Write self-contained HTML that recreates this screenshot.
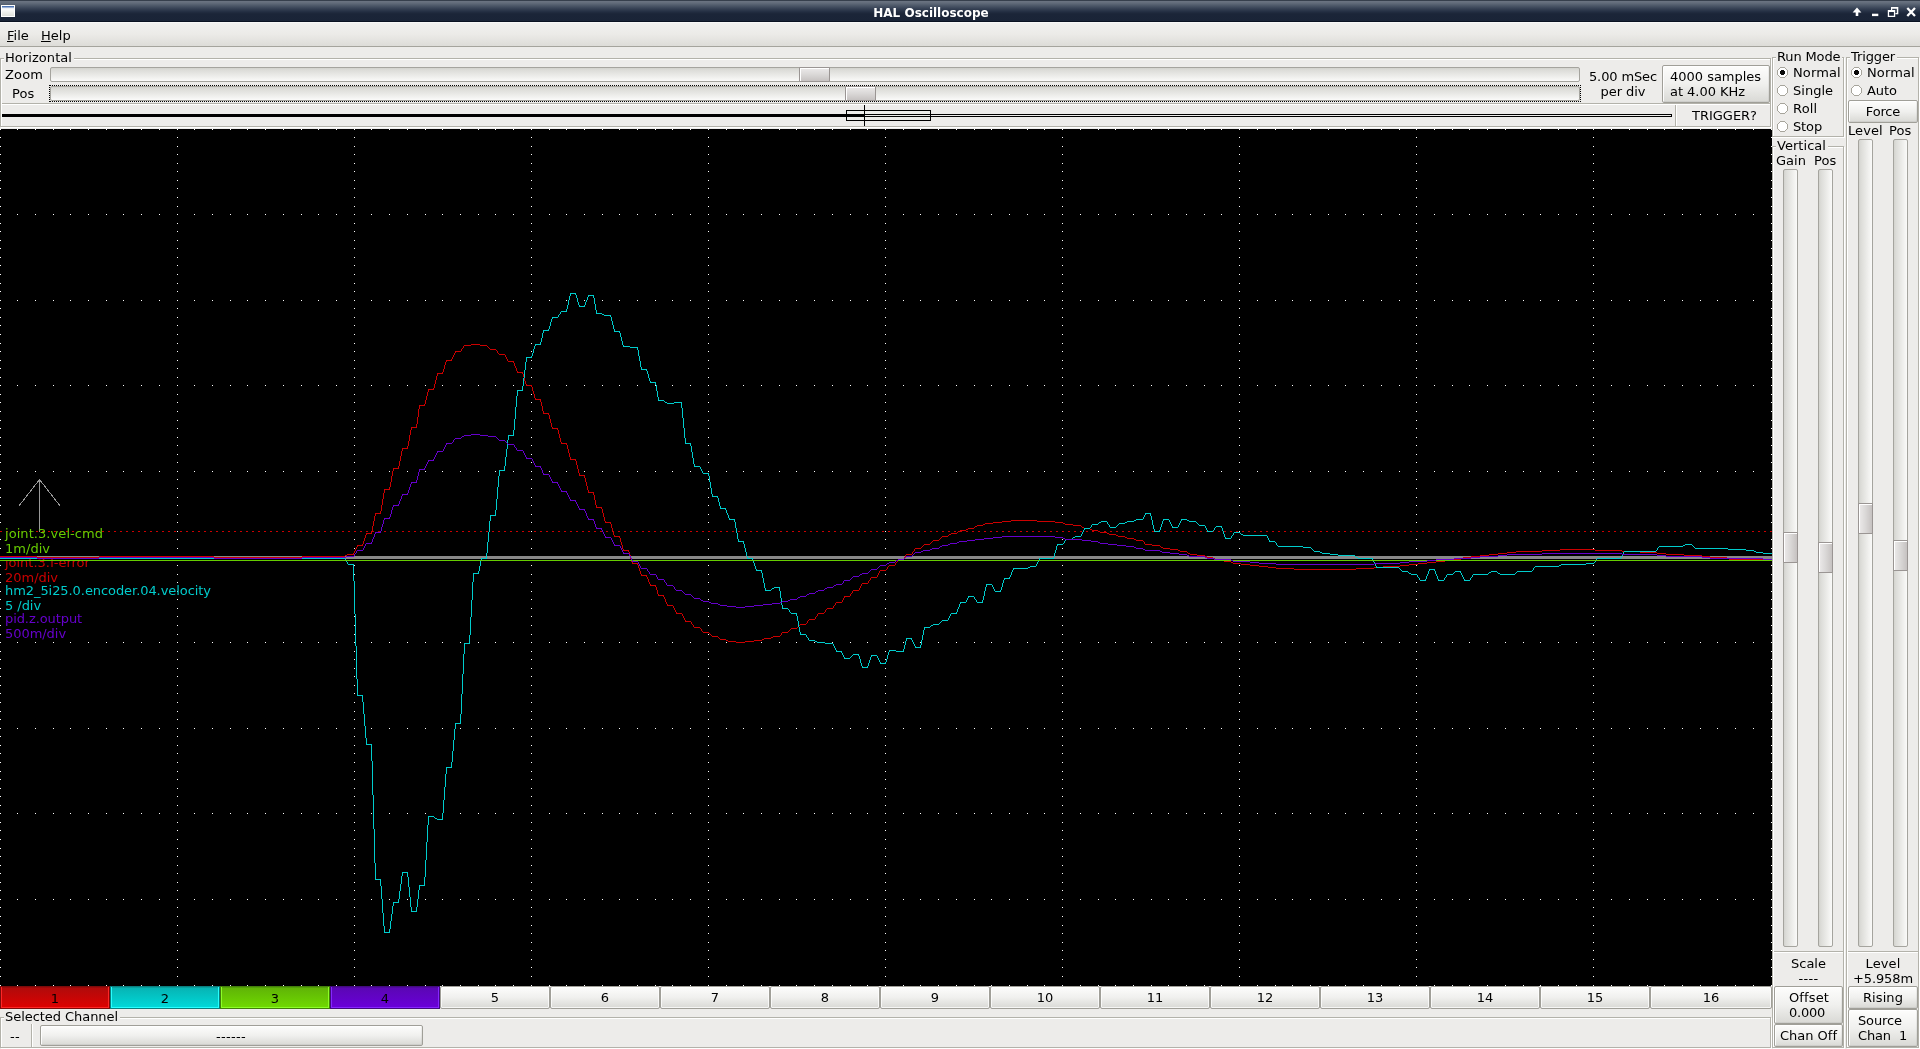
<!DOCTYPE html>
<html><head><meta charset="utf-8"><title>HAL Oscilloscope</title>
<style>
html,body{margin:0;padding:0;}
body{width:1920px;height:1049px;position:relative;overflow:hidden;background:#edecea;font-family:"DejaVu Sans","Liberation Sans",sans-serif;font-size:13px;color:#000;}
.a{position:absolute;white-space:nowrap;}
.t{position:absolute;white-space:nowrap;line-height:15px;height:15px;will-change:transform;}
.c{text-align:center;}
#title{left:0;top:0;width:1920px;height:22px;background:linear-gradient(#363f4c 0px,#363f4c 1px,#6b7482 1px,#626c7a 3px,#4a5566 6px,#343f52 9px,#222d41 12px,#1b2538 14px,#1a2437 21px,#0a1222 21px,#0a1222 22px);}
#title .tt{will-change:transform;left:0;width:1862px;top:5px;text-align:center;color:#fff;font-weight:bold;font-size:12px;line-height:16px;letter-spacing:0;}
#menu{left:0;top:22px;width:1920px;height:24px;background:linear-gradient(#fff 0,#f1f1ef 1px,#ecebe8 12px,#dddcd8 24px);border-bottom:1px solid #a5a49d;}
.frame{position:absolute;border:1px solid #b3b2aa;box-shadow:1px 1px 0 #fff, inset 1px 1px 0 #fff;box-sizing:border-box;}
.flab{position:absolute;background:#edecea;padding:0 2px 0 1px;line-height:15px;height:15px;white-space:nowrap;will-change:transform;}
.btn{position:absolute;box-sizing:border-box;border:1px solid #a09f98;border-radius:2px;background:linear-gradient(#fdfdfc 0,#f0f0ee 50%,#d9d9d5 100%);box-shadow:inset 1px 1px 0 rgba(255,255,255,.9), inset -1px -1px 0 rgba(0,0,0,.05);}
.htr{position:absolute;box-sizing:border-box;border:1px solid #a5a49e;border-radius:2px;background:linear-gradient(#d3d3ce 0,#dcdcd8 15%,#f3f3f1 80%,#fafaf9 100%);}
.vtr{position:absolute;box-sizing:border-box;border:1px solid #a5a49e;border-radius:2px;background:linear-gradient(90deg,#d3d3ce 0,#dcdcd8 15%,#f3f3f1 80%,#fafaf9 100%);}
.hth{position:absolute;box-sizing:border-box;border:1px solid #9a9593;border-radius:1px;background:linear-gradient(#eceaea 0,#dad8d7 50%,#c6c2c1 100%);box-shadow:inset 1px 1px 0 #fff;}
.vth{position:absolute;box-sizing:border-box;border:1px solid #9a9593;border-radius:1px;background:linear-gradient(90deg,#eceaea 0,#dad8d7 50%,#c6c2c1 100%);box-shadow:inset 1px 1px 0 #fff;}
.radio{position:absolute;width:11px;height:11px;box-sizing:border-box;border:1px solid #9c9b94;border-radius:50%;background:#fff;}
.radio.on::after{content:"";position:absolute;left:2px;top:2px;width:5px;height:5px;border-radius:50%;background:#000;}
.chb{will-change:transform;position:absolute;top:986px;height:23px;box-sizing:border-box;text-align:center;line-height:24px;color:#000;}
.chn{line-height:22px;border:1px solid #a09f98;border-radius:2px;background:linear-gradient(#fdfdfc 0,#f0f0ee 50%,#d9d9d5 100%);box-shadow:inset 0 0 0 1px rgba(255,255,255,.75);}
.hl{position:absolute;height:1px;background:#b3b2aa;box-shadow:0 1px 0 #fff;}
.vl{position:absolute;width:1px;background:#b3b2aa;box-shadow:1px 0 0 #fff;}
u{text-decoration:underline;text-underline-offset:1px;}
#scope{position:absolute;left:0;top:129px;}
</style></head><body>

<!-- title bar -->
<div class="a" id="title">
 <div class="a" style="left:1px;top:5px;width:14px;height:12px;box-sizing:border-box;border:1px solid #fff;background:linear-gradient(#3f67a8 0,#5b80bb 1px,#dfe6f2 2px,#fdfdfd 3px,#f0f1ee 6px,#dfe0db 10px);"></div>
 <div class="a tt">HAL Oscilloscope</div>
 <svg class="a" style="left:1845px;top:0" width="75" height="22" viewBox="1845 0 75 22">
  <path d="M1857 7.6 L1861.4 12.6 H1858.3 V16 H1855.7 V12.6 H1852.6 Z" fill="#fff"/>
  <rect x="1872" y="13.7" width="6.3" height="2.4" fill="#fff"/>
  <path d="M1891 6.9 H1898.3 V14.3 H1895.4 V13.1 H1896.8 V8.8 H1892.2 V10 H1891 Z" fill="#fff"/>
  <path d="M1887.8 10 H1895.2 V17 H1887.8 Z M1889.1 12.1 V15.8 H1893.9 V12.1 Z" fill="#fff" fill-rule="evenodd"/>
  <path d="M1907.3 8 L1915 16 M1915 8 L1907.3 16" stroke="#fff" stroke-width="2.3" fill="none"/>
 </svg>
</div>

<!-- menu bar -->
<div class="a" id="menu">
 <div class="t" style="left:7px;top:6px;"><u>F</u>ile</div>
 <div class="t" style="left:41px;top:6px;"><u>H</u>elp</div>
</div>

<!-- Horizontal frame -->
<div class="frame" style="left:0;top:58px;width:1771px;height:69px;"></div>
<div class="flab" style="left:4px;top:50px;letter-spacing:0.062px;">Horizontal</div>
<div class="t" style="left:5px;top:67px;letter-spacing:0.133px;">Zoom</div>
<div class="t" style="left:12px;top:86px;letter-spacing:0.146px;">Pos</div>
<div class="htr" style="left:50px;top:67px;width:1530px;height:15px;"></div>
<div class="hth" style="left:799px;top:67px;width:31px;height:15px;"></div>
<div class="a" style="left:49px;top:85px;width:1532px;height:17px;box-sizing:border-box;border:1px dotted #000;"></div>
<div class="htr" style="left:50px;top:86px;width:1530px;height:15px;"></div>
<div class="hth" style="left:845px;top:86px;width:31px;height:15px;"></div>
<div class="t c" style="left:1583px;width:80px;top:69px;letter-spacing:-0.122px;">5.00 mSec</div>
<div class="t c" style="left:1583px;width:80px;top:84px;letter-spacing:-0.038px;">per div</div>
<div class="btn" style="left:1662px;top:65px;width:108px;height:38px;"></div>
<div class="t" style="left:1670px;top:69px;letter-spacing:-0.017px;">4000 samples</div>
<div class="t" style="left:1670px;top:84px;letter-spacing:-0.034px;">at 4.00 KHz</div>
<div class="hl" style="left:2px;top:103px;width:1768px;"></div>
<div class="vl" style="left:1675px;top:105px;height:21px;"></div>
<div class="t" style="left:1692px;top:108px;letter-spacing:-0.014px;">TRIGGER?</div>
<!-- record indicator -->
<svg class="a" style="left:0;top:104px" width="1680" height="23" viewBox="0 104 1680 23" shape-rendering="crispEdges">
 <rect x="2" y="114" width="863" height="3" fill="#000"/>
 <rect x="864.5" y="114.5" width="807" height="2" fill="none" stroke="#000" stroke-width="1"/>
 <rect x="846.5" y="110.5" width="84" height="10" fill="none" stroke="#000" stroke-width="1"/>
 <rect x="864" y="105" width="1" height="21" fill="#000"/>
</svg>

<svg id="scope" width="1772" height="857" viewBox="0 129 1772 857" shape-rendering="crispEdges">
<rect x="0" y="129" width="1772" height="857" fill="#000"/>
<g transform="translate(0,129.5)"><path d="M0 0h1M17 0h1M35 0h1M53 0h1M70 0h1M88 0h1M106 0h1M123 0h1M141 0h1M159 0h1M177 0h1M194 0h1M212 0h1M230 0h1M247 0h1M265 0h1M283 0h1M301 0h1M318 0h1M336 0h1M354 0h1M371 0h1M389 0h1M407 0h1M425 0h1M442 0h1M460 0h1M478 0h1M495 0h1M513 0h1M531 0h1M549 0h1M566 0h1M584 0h1M602 0h1M619 0h1M637 0h1M655 0h1M672 0h1M690 0h1M708 0h1M726 0h1M743 0h1M761 0h1M779 0h1M796 0h1M814 0h1M832 0h1M850 0h1M867 0h1M885 0h1M903 0h1M920 0h1M938 0h1M956 0h1M974 0h1M991 0h1M1009 0h1M1027 0h1M1044 0h1M1062 0h1M1080 0h1M1098 0h1M1115 0h1M1133 0h1M1151 0h1M1168 0h1M1186 0h1M1204 0h1M1221 0h1M1239 0h1M1257 0h1M1275 0h1M1292 0h1M1310 0h1M1328 0h1M1345 0h1M1363 0h1M1381 0h1M1399 0h1M1416 0h1M1434 0h1M1452 0h1M1469 0h1M1487 0h1M1505 0h1M1523 0h1M1540 0h1M1558 0h1M1576 0h1M1593 0h1M1611 0h1M1629 0h1M1647 0h1M1664 0h1M1682 0h1M1700 0h1M1717 0h1M1735 0h1M1753 0h1M1771 0h1M0 8h1M177 8h1M354 8h1M531 8h1M708 8h1M885 8h1M1062 8h1M1239 8h1M1416 8h1M1593 8h1M1771 8h1M0 17h1M177 17h1M354 17h1M531 17h1M708 17h1M885 17h1M1062 17h1M1239 17h1M1416 17h1M1593 17h1M1771 17h1M0 25h1M177 25h1M354 25h1M531 25h1M708 25h1M885 25h1M1062 25h1M1239 25h1M1416 25h1M1593 25h1M1771 25h1M0 34h1M177 34h1M354 34h1M531 34h1M708 34h1M885 34h1M1062 34h1M1239 34h1M1416 34h1M1593 34h1M1771 34h1M0 42h1M177 42h1M354 42h1M531 42h1M708 42h1M885 42h1M1062 42h1M1239 42h1M1416 42h1M1593 42h1M1771 42h1M0 51h1M177 51h1M354 51h1M531 51h1M708 51h1M885 51h1M1062 51h1M1239 51h1M1416 51h1M1593 51h1M1771 51h1M0 59h1M177 59h1M354 59h1M531 59h1M708 59h1M885 59h1M1062 59h1M1239 59h1M1416 59h1M1593 59h1M1771 59h1M0 68h1M177 68h1M354 68h1M531 68h1M708 68h1M885 68h1M1062 68h1M1239 68h1M1416 68h1M1593 68h1M1771 68h1M0 77h1M177 77h1M354 77h1M531 77h1M708 77h1M885 77h1M1062 77h1M1239 77h1M1416 77h1M1593 77h1M1771 77h1M0 85h1M17 85h1M35 85h1M53 85h1M70 85h1M88 85h1M106 85h1M123 85h1M141 85h1M159 85h1M177 85h1M194 85h1M212 85h1M230 85h1M247 85h1M265 85h1M283 85h1M301 85h1M318 85h1M336 85h1M354 85h1M371 85h1M389 85h1M407 85h1M425 85h1M442 85h1M460 85h1M478 85h1M495 85h1M513 85h1M531 85h1M549 85h1M566 85h1M584 85h1M602 85h1M619 85h1M637 85h1M655 85h1M672 85h1M690 85h1M708 85h1M726 85h1M743 85h1M761 85h1M779 85h1M796 85h1M814 85h1M832 85h1M850 85h1M867 85h1M885 85h1M903 85h1M920 85h1M938 85h1M956 85h1M974 85h1M991 85h1M1009 85h1M1027 85h1M1044 85h1M1062 85h1M1080 85h1M1098 85h1M1115 85h1M1133 85h1M1151 85h1M1168 85h1M1186 85h1M1204 85h1M1221 85h1M1239 85h1M1257 85h1M1275 85h1M1292 85h1M1310 85h1M1328 85h1M1345 85h1M1363 85h1M1381 85h1M1399 85h1M1416 85h1M1434 85h1M1452 85h1M1469 85h1M1487 85h1M1505 85h1M1523 85h1M1540 85h1M1558 85h1M1576 85h1M1593 85h1M1611 85h1M1629 85h1M1647 85h1M1664 85h1M1682 85h1M1700 85h1M1717 85h1M1735 85h1M1753 85h1M1771 85h1M0 94h1M177 94h1M354 94h1M531 94h1M708 94h1M885 94h1M1062 94h1M1239 94h1M1416 94h1M1593 94h1M1771 94h1M0 102h1M177 102h1M354 102h1M531 102h1M708 102h1M885 102h1M1062 102h1M1239 102h1M1416 102h1M1593 102h1M1771 102h1M0 111h1M177 111h1M354 111h1M531 111h1M708 111h1M885 111h1M1062 111h1M1239 111h1M1416 111h1M1593 111h1M1771 111h1M0 119h1M177 119h1M354 119h1M531 119h1M708 119h1M885 119h1M1062 119h1M1239 119h1M1416 119h1M1593 119h1M1771 119h1M0 128h1M177 128h1M354 128h1M531 128h1M708 128h1M885 128h1M1062 128h1M1239 128h1M1416 128h1M1593 128h1M1771 128h1M0 136h1M177 136h1M354 136h1M531 136h1M708 136h1M885 136h1M1062 136h1M1239 136h1M1416 136h1M1593 136h1M1771 136h1M0 145h1M177 145h1M354 145h1M531 145h1M708 145h1M885 145h1M1062 145h1M1239 145h1M1416 145h1M1593 145h1M1771 145h1M0 154h1M177 154h1M354 154h1M531 154h1M708 154h1M885 154h1M1062 154h1M1239 154h1M1416 154h1M1593 154h1M1771 154h1M0 162h1M177 162h1M354 162h1M531 162h1M708 162h1M885 162h1M1062 162h1M1239 162h1M1416 162h1M1593 162h1M1771 162h1M0 171h1M17 171h1M35 171h1M53 171h1M70 171h1M88 171h1M106 171h1M123 171h1M141 171h1M159 171h1M177 171h1M194 171h1M212 171h1M230 171h1M247 171h1M265 171h1M283 171h1M301 171h1M318 171h1M336 171h1M354 171h1M371 171h1M389 171h1M407 171h1M425 171h1M442 171h1M460 171h1M478 171h1M495 171h1M513 171h1M531 171h1M549 171h1M566 171h1M584 171h1M602 171h1M619 171h1M637 171h1M655 171h1M672 171h1M690 171h1M708 171h1M726 171h1M743 171h1M761 171h1M779 171h1M796 171h1M814 171h1M832 171h1M850 171h1M867 171h1M885 171h1M903 171h1M920 171h1M938 171h1M956 171h1M974 171h1M991 171h1M1009 171h1M1027 171h1M1044 171h1M1062 171h1M1080 171h1M1098 171h1M1115 171h1M1133 171h1M1151 171h1M1168 171h1M1186 171h1M1204 171h1M1221 171h1M1239 171h1M1257 171h1M1275 171h1M1292 171h1M1310 171h1M1328 171h1M1345 171h1M1363 171h1M1381 171h1M1399 171h1M1416 171h1M1434 171h1M1452 171h1M1469 171h1M1487 171h1M1505 171h1M1523 171h1M1540 171h1M1558 171h1M1576 171h1M1593 171h1M1611 171h1M1629 171h1M1647 171h1M1664 171h1M1682 171h1M1700 171h1M1717 171h1M1735 171h1M1753 171h1M1771 171h1M0 179h1M177 179h1M354 179h1M531 179h1M708 179h1M885 179h1M1062 179h1M1239 179h1M1416 179h1M1593 179h1M1771 179h1M0 188h1M177 188h1M354 188h1M531 188h1M708 188h1M885 188h1M1062 188h1M1239 188h1M1416 188h1M1593 188h1M1771 188h1M0 196h1M177 196h1M354 196h1M531 196h1M708 196h1M885 196h1M1062 196h1M1239 196h1M1416 196h1M1593 196h1M1771 196h1M0 205h1M177 205h1M354 205h1M531 205h1M708 205h1M885 205h1M1062 205h1M1239 205h1M1416 205h1M1593 205h1M1771 205h1M0 214h1M177 214h1M354 214h1M531 214h1M708 214h1M885 214h1M1062 214h1M1239 214h1M1416 214h1M1593 214h1M1771 214h1M0 222h1M177 222h1M354 222h1M531 222h1M708 222h1M885 222h1M1062 222h1M1239 222h1M1416 222h1M1593 222h1M1771 222h1M0 231h1M177 231h1M354 231h1M531 231h1M708 231h1M885 231h1M1062 231h1M1239 231h1M1416 231h1M1593 231h1M1771 231h1M0 239h1M177 239h1M354 239h1M531 239h1M708 239h1M885 239h1M1062 239h1M1239 239h1M1416 239h1M1593 239h1M1771 239h1M0 248h1M177 248h1M354 248h1M531 248h1M708 248h1M885 248h1M1062 248h1M1239 248h1M1416 248h1M1593 248h1M1771 248h1M0 256h1M17 256h1M35 256h1M53 256h1M70 256h1M88 256h1M106 256h1M123 256h1M141 256h1M159 256h1M177 256h1M194 256h1M212 256h1M230 256h1M247 256h1M265 256h1M283 256h1M301 256h1M318 256h1M336 256h1M354 256h1M371 256h1M389 256h1M407 256h1M425 256h1M442 256h1M460 256h1M478 256h1M495 256h1M513 256h1M531 256h1M549 256h1M566 256h1M584 256h1M602 256h1M619 256h1M637 256h1M655 256h1M672 256h1M690 256h1M708 256h1M726 256h1M743 256h1M761 256h1M779 256h1M796 256h1M814 256h1M832 256h1M850 256h1M867 256h1M885 256h1M903 256h1M920 256h1M938 256h1M956 256h1M974 256h1M991 256h1M1009 256h1M1027 256h1M1044 256h1M1062 256h1M1080 256h1M1098 256h1M1115 256h1M1133 256h1M1151 256h1M1168 256h1M1186 256h1M1204 256h1M1221 256h1M1239 256h1M1257 256h1M1275 256h1M1292 256h1M1310 256h1M1328 256h1M1345 256h1M1363 256h1M1381 256h1M1399 256h1M1416 256h1M1434 256h1M1452 256h1M1469 256h1M1487 256h1M1505 256h1M1523 256h1M1540 256h1M1558 256h1M1576 256h1M1593 256h1M1611 256h1M1629 256h1M1647 256h1M1664 256h1M1682 256h1M1700 256h1M1717 256h1M1735 256h1M1753 256h1M1771 256h1M0 265h1M177 265h1M354 265h1M531 265h1M708 265h1M885 265h1M1062 265h1M1239 265h1M1416 265h1M1593 265h1M1771 265h1M0 273h1M177 273h1M354 273h1M531 273h1M708 273h1M885 273h1M1062 273h1M1239 273h1M1416 273h1M1593 273h1M1771 273h1M0 282h1M177 282h1M354 282h1M531 282h1M708 282h1M885 282h1M1062 282h1M1239 282h1M1416 282h1M1593 282h1M1771 282h1M0 291h1M177 291h1M354 291h1M531 291h1M708 291h1M885 291h1M1062 291h1M1239 291h1M1416 291h1M1593 291h1M1771 291h1M0 299h1M177 299h1M354 299h1M531 299h1M708 299h1M885 299h1M1062 299h1M1239 299h1M1416 299h1M1593 299h1M1771 299h1M0 308h1M177 308h1M354 308h1M531 308h1M708 308h1M885 308h1M1062 308h1M1239 308h1M1416 308h1M1593 308h1M1771 308h1M0 316h1M177 316h1M354 316h1M531 316h1M708 316h1M885 316h1M1062 316h1M1239 316h1M1416 316h1M1593 316h1M1771 316h1M0 325h1M177 325h1M354 325h1M531 325h1M708 325h1M885 325h1M1062 325h1M1239 325h1M1416 325h1M1593 325h1M1771 325h1M0 333h1M177 333h1M354 333h1M531 333h1M708 333h1M885 333h1M1062 333h1M1239 333h1M1416 333h1M1593 333h1M1771 333h1M0 342h1M17 342h1M35 342h1M53 342h1M70 342h1M88 342h1M106 342h1M123 342h1M141 342h1M159 342h1M177 342h1M194 342h1M212 342h1M230 342h1M247 342h1M265 342h1M283 342h1M301 342h1M318 342h1M336 342h1M354 342h1M371 342h1M389 342h1M407 342h1M425 342h1M442 342h1M460 342h1M478 342h1M495 342h1M513 342h1M531 342h1M549 342h1M566 342h1M584 342h1M602 342h1M619 342h1M637 342h1M655 342h1M672 342h1M690 342h1M708 342h1M726 342h1M743 342h1M761 342h1M779 342h1M796 342h1M814 342h1M832 342h1M850 342h1M867 342h1M885 342h1M903 342h1M920 342h1M938 342h1M956 342h1M974 342h1M991 342h1M1009 342h1M1027 342h1M1044 342h1M1062 342h1M1080 342h1M1098 342h1M1115 342h1M1133 342h1M1151 342h1M1168 342h1M1186 342h1M1204 342h1M1221 342h1M1239 342h1M1257 342h1M1275 342h1M1292 342h1M1310 342h1M1328 342h1M1345 342h1M1363 342h1M1381 342h1M1399 342h1M1416 342h1M1434 342h1M1452 342h1M1469 342h1M1487 342h1M1505 342h1M1523 342h1M1540 342h1M1558 342h1M1576 342h1M1593 342h1M1611 342h1M1629 342h1M1647 342h1M1664 342h1M1682 342h1M1700 342h1M1717 342h1M1735 342h1M1753 342h1M1771 342h1M0 350h1M177 350h1M354 350h1M531 350h1M708 350h1M885 350h1M1062 350h1M1239 350h1M1416 350h1M1593 350h1M1771 350h1M0 359h1M177 359h1M354 359h1M531 359h1M708 359h1M885 359h1M1062 359h1M1239 359h1M1416 359h1M1593 359h1M1771 359h1M0 368h1M177 368h1M354 368h1M531 368h1M708 368h1M885 368h1M1062 368h1M1239 368h1M1416 368h1M1593 368h1M1771 368h1M0 376h1M177 376h1M354 376h1M531 376h1M708 376h1M885 376h1M1062 376h1M1239 376h1M1416 376h1M1593 376h1M1771 376h1M0 385h1M177 385h1M354 385h1M531 385h1M708 385h1M885 385h1M1062 385h1M1239 385h1M1416 385h1M1593 385h1M1771 385h1M0 393h1M177 393h1M354 393h1M531 393h1M708 393h1M885 393h1M1062 393h1M1239 393h1M1416 393h1M1593 393h1M1771 393h1M0 402h1M177 402h1M354 402h1M531 402h1M708 402h1M885 402h1M1062 402h1M1239 402h1M1416 402h1M1593 402h1M1771 402h1M0 410h1M177 410h1M354 410h1M531 410h1M708 410h1M885 410h1M1062 410h1M1239 410h1M1416 410h1M1593 410h1M1771 410h1M0 419h1M177 419h1M354 419h1M531 419h1M708 419h1M885 419h1M1062 419h1M1239 419h1M1416 419h1M1593 419h1M1771 419h1M0 428h1M17 428h1M35 428h1M53 428h1M70 428h1M88 428h1M106 428h1M123 428h1M141 428h1M159 428h1M177 428h1M194 428h1M212 428h1M230 428h1M247 428h1M265 428h1M283 428h1M301 428h1M318 428h1M336 428h1M354 428h1M371 428h1M389 428h1M407 428h1M425 428h1M442 428h1M460 428h1M478 428h1M495 428h1M513 428h1M531 428h1M549 428h1M566 428h1M584 428h1M602 428h1M619 428h1M637 428h1M655 428h1M672 428h1M690 428h1M708 428h1M726 428h1M743 428h1M761 428h1M779 428h1M796 428h1M814 428h1M832 428h1M850 428h1M867 428h1M885 428h1M903 428h1M920 428h1M938 428h1M956 428h1M974 428h1M991 428h1M1009 428h1M1027 428h1M1044 428h1M1062 428h1M1080 428h1M1098 428h1M1115 428h1M1133 428h1M1151 428h1M1168 428h1M1186 428h1M1204 428h1M1221 428h1M1239 428h1M1257 428h1M1275 428h1M1292 428h1M1310 428h1M1328 428h1M1345 428h1M1363 428h1M1381 428h1M1399 428h1M1416 428h1M1434 428h1M1452 428h1M1469 428h1M1487 428h1M1505 428h1M1523 428h1M1540 428h1M1558 428h1M1576 428h1M1593 428h1M1611 428h1M1629 428h1M1647 428h1M1664 428h1M1682 428h1M1700 428h1M1717 428h1M1735 428h1M1753 428h1M1771 428h1M0 436h1M177 436h1M354 436h1M531 436h1M708 436h1M885 436h1M1062 436h1M1239 436h1M1416 436h1M1593 436h1M1771 436h1M0 445h1M177 445h1M354 445h1M531 445h1M708 445h1M885 445h1M1062 445h1M1239 445h1M1416 445h1M1593 445h1M1771 445h1M0 453h1M177 453h1M354 453h1M531 453h1M708 453h1M885 453h1M1062 453h1M1239 453h1M1416 453h1M1593 453h1M1771 453h1M0 462h1M177 462h1M354 462h1M531 462h1M708 462h1M885 462h1M1062 462h1M1239 462h1M1416 462h1M1593 462h1M1771 462h1M0 470h1M177 470h1M354 470h1M531 470h1M708 470h1M885 470h1M1062 470h1M1239 470h1M1416 470h1M1593 470h1M1771 470h1M0 479h1M177 479h1M354 479h1M531 479h1M708 479h1M885 479h1M1062 479h1M1239 479h1M1416 479h1M1593 479h1M1771 479h1M0 487h1M177 487h1M354 487h1M531 487h1M708 487h1M885 487h1M1062 487h1M1239 487h1M1416 487h1M1593 487h1M1771 487h1M0 496h1M177 496h1M354 496h1M531 496h1M708 496h1M885 496h1M1062 496h1M1239 496h1M1416 496h1M1593 496h1M1771 496h1M0 505h1M177 505h1M354 505h1M531 505h1M708 505h1M885 505h1M1062 505h1M1239 505h1M1416 505h1M1593 505h1M1771 505h1M0 513h1M17 513h1M35 513h1M53 513h1M70 513h1M88 513h1M106 513h1M123 513h1M141 513h1M159 513h1M177 513h1M194 513h1M212 513h1M230 513h1M247 513h1M265 513h1M283 513h1M301 513h1M318 513h1M336 513h1M354 513h1M371 513h1M389 513h1M407 513h1M425 513h1M442 513h1M460 513h1M478 513h1M495 513h1M513 513h1M531 513h1M549 513h1M566 513h1M584 513h1M602 513h1M619 513h1M637 513h1M655 513h1M672 513h1M690 513h1M708 513h1M726 513h1M743 513h1M761 513h1M779 513h1M796 513h1M814 513h1M832 513h1M850 513h1M867 513h1M885 513h1M903 513h1M920 513h1M938 513h1M956 513h1M974 513h1M991 513h1M1009 513h1M1027 513h1M1044 513h1M1062 513h1M1080 513h1M1098 513h1M1115 513h1M1133 513h1M1151 513h1M1168 513h1M1186 513h1M1204 513h1M1221 513h1M1239 513h1M1257 513h1M1275 513h1M1292 513h1M1310 513h1M1328 513h1M1345 513h1M1363 513h1M1381 513h1M1399 513h1M1416 513h1M1434 513h1M1452 513h1M1469 513h1M1487 513h1M1505 513h1M1523 513h1M1540 513h1M1558 513h1M1576 513h1M1593 513h1M1611 513h1M1629 513h1M1647 513h1M1664 513h1M1682 513h1M1700 513h1M1717 513h1M1735 513h1M1753 513h1M1771 513h1M0 522h1M177 522h1M354 522h1M531 522h1M708 522h1M885 522h1M1062 522h1M1239 522h1M1416 522h1M1593 522h1M1771 522h1M0 530h1M177 530h1M354 530h1M531 530h1M708 530h1M885 530h1M1062 530h1M1239 530h1M1416 530h1M1593 530h1M1771 530h1M0 539h1M177 539h1M354 539h1M531 539h1M708 539h1M885 539h1M1062 539h1M1239 539h1M1416 539h1M1593 539h1M1771 539h1M0 547h1M177 547h1M354 547h1M531 547h1M708 547h1M885 547h1M1062 547h1M1239 547h1M1416 547h1M1593 547h1M1771 547h1M0 556h1M177 556h1M354 556h1M531 556h1M708 556h1M885 556h1M1062 556h1M1239 556h1M1416 556h1M1593 556h1M1771 556h1M0 564h1M177 564h1M354 564h1M531 564h1M708 564h1M885 564h1M1062 564h1M1239 564h1M1416 564h1M1593 564h1M1771 564h1M0 573h1M177 573h1M354 573h1M531 573h1M708 573h1M885 573h1M1062 573h1M1239 573h1M1416 573h1M1593 573h1M1771 573h1M0 582h1M177 582h1M354 582h1M531 582h1M708 582h1M885 582h1M1062 582h1M1239 582h1M1416 582h1M1593 582h1M1771 582h1M0 590h1M177 590h1M354 590h1M531 590h1M708 590h1M885 590h1M1062 590h1M1239 590h1M1416 590h1M1593 590h1M1771 590h1M0 599h1M17 599h1M35 599h1M53 599h1M70 599h1M88 599h1M106 599h1M123 599h1M141 599h1M159 599h1M177 599h1M194 599h1M212 599h1M230 599h1M247 599h1M265 599h1M283 599h1M301 599h1M318 599h1M336 599h1M354 599h1M371 599h1M389 599h1M407 599h1M425 599h1M442 599h1M460 599h1M478 599h1M495 599h1M513 599h1M531 599h1M549 599h1M566 599h1M584 599h1M602 599h1M619 599h1M637 599h1M655 599h1M672 599h1M690 599h1M708 599h1M726 599h1M743 599h1M761 599h1M779 599h1M796 599h1M814 599h1M832 599h1M850 599h1M867 599h1M885 599h1M903 599h1M920 599h1M938 599h1M956 599h1M974 599h1M991 599h1M1009 599h1M1027 599h1M1044 599h1M1062 599h1M1080 599h1M1098 599h1M1115 599h1M1133 599h1M1151 599h1M1168 599h1M1186 599h1M1204 599h1M1221 599h1M1239 599h1M1257 599h1M1275 599h1M1292 599h1M1310 599h1M1328 599h1M1345 599h1M1363 599h1M1381 599h1M1399 599h1M1416 599h1M1434 599h1M1452 599h1M1469 599h1M1487 599h1M1505 599h1M1523 599h1M1540 599h1M1558 599h1M1576 599h1M1593 599h1M1611 599h1M1629 599h1M1647 599h1M1664 599h1M1682 599h1M1700 599h1M1717 599h1M1735 599h1M1753 599h1M1771 599h1M0 607h1M177 607h1M354 607h1M531 607h1M708 607h1M885 607h1M1062 607h1M1239 607h1M1416 607h1M1593 607h1M1771 607h1M0 616h1M177 616h1M354 616h1M531 616h1M708 616h1M885 616h1M1062 616h1M1239 616h1M1416 616h1M1593 616h1M1771 616h1M0 624h1M177 624h1M354 624h1M531 624h1M708 624h1M885 624h1M1062 624h1M1239 624h1M1416 624h1M1593 624h1M1771 624h1M0 633h1M177 633h1M354 633h1M531 633h1M708 633h1M885 633h1M1062 633h1M1239 633h1M1416 633h1M1593 633h1M1771 633h1M0 642h1M177 642h1M354 642h1M531 642h1M708 642h1M885 642h1M1062 642h1M1239 642h1M1416 642h1M1593 642h1M1771 642h1M0 650h1M177 650h1M354 650h1M531 650h1M708 650h1M885 650h1M1062 650h1M1239 650h1M1416 650h1M1593 650h1M1771 650h1M0 659h1M177 659h1M354 659h1M531 659h1M708 659h1M885 659h1M1062 659h1M1239 659h1M1416 659h1M1593 659h1M1771 659h1M0 667h1M177 667h1M354 667h1M531 667h1M708 667h1M885 667h1M1062 667h1M1239 667h1M1416 667h1M1593 667h1M1771 667h1M0 676h1M177 676h1M354 676h1M531 676h1M708 676h1M885 676h1M1062 676h1M1239 676h1M1416 676h1M1593 676h1M1771 676h1M0 684h1M17 684h1M35 684h1M53 684h1M70 684h1M88 684h1M106 684h1M123 684h1M141 684h1M159 684h1M177 684h1M194 684h1M212 684h1M230 684h1M247 684h1M265 684h1M283 684h1M301 684h1M318 684h1M336 684h1M354 684h1M371 684h1M389 684h1M407 684h1M425 684h1M442 684h1M460 684h1M478 684h1M495 684h1M513 684h1M531 684h1M549 684h1M566 684h1M584 684h1M602 684h1M619 684h1M637 684h1M655 684h1M672 684h1M690 684h1M708 684h1M726 684h1M743 684h1M761 684h1M779 684h1M796 684h1M814 684h1M832 684h1M850 684h1M867 684h1M885 684h1M903 684h1M920 684h1M938 684h1M956 684h1M974 684h1M991 684h1M1009 684h1M1027 684h1M1044 684h1M1062 684h1M1080 684h1M1098 684h1M1115 684h1M1133 684h1M1151 684h1M1168 684h1M1186 684h1M1204 684h1M1221 684h1M1239 684h1M1257 684h1M1275 684h1M1292 684h1M1310 684h1M1328 684h1M1345 684h1M1363 684h1M1381 684h1M1399 684h1M1416 684h1M1434 684h1M1452 684h1M1469 684h1M1487 684h1M1505 684h1M1523 684h1M1540 684h1M1558 684h1M1576 684h1M1593 684h1M1611 684h1M1629 684h1M1647 684h1M1664 684h1M1682 684h1M1700 684h1M1717 684h1M1735 684h1M1753 684h1M1771 684h1M0 693h1M177 693h1M354 693h1M531 693h1M708 693h1M885 693h1M1062 693h1M1239 693h1M1416 693h1M1593 693h1M1771 693h1M0 701h1M177 701h1M354 701h1M531 701h1M708 701h1M885 701h1M1062 701h1M1239 701h1M1416 701h1M1593 701h1M1771 701h1M0 710h1M177 710h1M354 710h1M531 710h1M708 710h1M885 710h1M1062 710h1M1239 710h1M1416 710h1M1593 710h1M1771 710h1M0 719h1M177 719h1M354 719h1M531 719h1M708 719h1M885 719h1M1062 719h1M1239 719h1M1416 719h1M1593 719h1M1771 719h1M0 727h1M177 727h1M354 727h1M531 727h1M708 727h1M885 727h1M1062 727h1M1239 727h1M1416 727h1M1593 727h1M1771 727h1M0 736h1M177 736h1M354 736h1M531 736h1M708 736h1M885 736h1M1062 736h1M1239 736h1M1416 736h1M1593 736h1M1771 736h1M0 744h1M177 744h1M354 744h1M531 744h1M708 744h1M885 744h1M1062 744h1M1239 744h1M1416 744h1M1593 744h1M1771 744h1M0 753h1M177 753h1M354 753h1M531 753h1M708 753h1M885 753h1M1062 753h1M1239 753h1M1416 753h1M1593 753h1M1771 753h1M0 761h1M177 761h1M354 761h1M531 761h1M708 761h1M885 761h1M1062 761h1M1239 761h1M1416 761h1M1593 761h1M1771 761h1M0 770h1M17 770h1M35 770h1M53 770h1M70 770h1M88 770h1M106 770h1M123 770h1M141 770h1M159 770h1M177 770h1M194 770h1M212 770h1M230 770h1M247 770h1M265 770h1M283 770h1M301 770h1M318 770h1M336 770h1M354 770h1M371 770h1M389 770h1M407 770h1M425 770h1M442 770h1M460 770h1M478 770h1M495 770h1M513 770h1M531 770h1M549 770h1M566 770h1M584 770h1M602 770h1M619 770h1M637 770h1M655 770h1M672 770h1M690 770h1M708 770h1M726 770h1M743 770h1M761 770h1M779 770h1M796 770h1M814 770h1M832 770h1M850 770h1M867 770h1M885 770h1M903 770h1M920 770h1M938 770h1M956 770h1M974 770h1M991 770h1M1009 770h1M1027 770h1M1044 770h1M1062 770h1M1080 770h1M1098 770h1M1115 770h1M1133 770h1M1151 770h1M1168 770h1M1186 770h1M1204 770h1M1221 770h1M1239 770h1M1257 770h1M1275 770h1M1292 770h1M1310 770h1M1328 770h1M1345 770h1M1363 770h1M1381 770h1M1399 770h1M1416 770h1M1434 770h1M1452 770h1M1469 770h1M1487 770h1M1505 770h1M1523 770h1M1540 770h1M1558 770h1M1576 770h1M1593 770h1M1611 770h1M1629 770h1M1647 770h1M1664 770h1M1682 770h1M1700 770h1M1717 770h1M1735 770h1M1753 770h1M1771 770h1M0 778h1M177 778h1M354 778h1M531 778h1M708 778h1M885 778h1M1062 778h1M1239 778h1M1416 778h1M1593 778h1M1771 778h1M0 787h1M177 787h1M354 787h1M531 787h1M708 787h1M885 787h1M1062 787h1M1239 787h1M1416 787h1M1593 787h1M1771 787h1M0 796h1M177 796h1M354 796h1M531 796h1M708 796h1M885 796h1M1062 796h1M1239 796h1M1416 796h1M1593 796h1M1771 796h1M0 804h1M177 804h1M354 804h1M531 804h1M708 804h1M885 804h1M1062 804h1M1239 804h1M1416 804h1M1593 804h1M1771 804h1M0 813h1M177 813h1M354 813h1M531 813h1M708 813h1M885 813h1M1062 813h1M1239 813h1M1416 813h1M1593 813h1M1771 813h1M0 821h1M177 821h1M354 821h1M531 821h1M708 821h1M885 821h1M1062 821h1M1239 821h1M1416 821h1M1593 821h1M1771 821h1M0 830h1M177 830h1M354 830h1M531 830h1M708 830h1M885 830h1M1062 830h1M1239 830h1M1416 830h1M1593 830h1M1771 830h1M0 838h1M177 838h1M354 838h1M531 838h1M708 838h1M885 838h1M1062 838h1M1239 838h1M1416 838h1M1593 838h1M1771 838h1M0 847h1M177 847h1M354 847h1M531 847h1M708 847h1M885 847h1M1062 847h1M1239 847h1M1416 847h1M1593 847h1M1771 847h1M0 856h1M17 856h1M35 856h1M53 856h1M70 856h1M88 856h1M106 856h1M123 856h1M141 856h1M159 856h1M177 856h1M194 856h1M212 856h1M230 856h1M247 856h1M265 856h1M283 856h1M301 856h1M318 856h1M336 856h1M354 856h1M371 856h1M389 856h1M407 856h1M425 856h1M442 856h1M460 856h1M478 856h1M495 856h1M513 856h1M531 856h1M549 856h1M566 856h1M584 856h1M602 856h1M619 856h1M637 856h1M655 856h1M672 856h1M690 856h1M708 856h1M726 856h1M743 856h1M761 856h1M779 856h1M796 856h1M814 856h1M832 856h1M850 856h1M867 856h1M885 856h1M903 856h1M920 856h1M938 856h1M956 856h1M974 856h1M991 856h1M1009 856h1M1027 856h1M1044 856h1M1062 856h1M1080 856h1M1098 856h1M1115 856h1M1133 856h1M1151 856h1M1168 856h1M1186 856h1M1204 856h1M1221 856h1M1239 856h1M1257 856h1M1275 856h1M1292 856h1M1310 856h1M1328 856h1M1345 856h1M1363 856h1M1381 856h1M1399 856h1M1416 856h1M1434 856h1M1452 856h1M1469 856h1M1487 856h1M1505 856h1M1523 856h1M1540 856h1M1558 856h1M1576 856h1M1593 856h1M1611 856h1M1629 856h1M1647 856h1M1664 856h1M1682 856h1M1700 856h1M1717 856h1M1735 856h1M1753 856h1M1771 856h1" stroke="#fff" stroke-width="1" fill="none"/></g>
<g stroke="#999" stroke-width="1" fill="none"><path d="M39.5 479.5V532"/><path d="M18.5 506.5L39.5 479.5L60.5 506.5" /></g>
<path d="M0 531.5H1772" stroke="#cc0000" stroke-width="1" stroke-dasharray="2 4" fill="none"/>
</svg>
<div class="t" style="left:5px;top:526px;color:#66cc00;margin-top:0;letter-spacing:0.064px;">joint.3.vel-cmd</div>
<div class="t" style="left:5px;top:541px;color:#66cc00;margin-top:0;letter-spacing:0.026px;">1m/div</div>
<div class="t" style="left:5px;top:555px;color:#cc0000;margin-top:0;letter-spacing:-0.018px;">joint.3.f-error</div>
<div class="t" style="left:5px;top:570px;color:#cc0000;margin-top:0;letter-spacing:-0.016px;">20m/div</div>
<div class="t" style="left:5px;top:583px;color:#00cccc;margin-top:0;letter-spacing:-0.069px;">hm2_5i25.0.encoder.04.velocity</div>
<div class="t" style="left:5px;top:598px;color:#00cccc;margin-top:0;letter-spacing:-0.052px;">5 /div</div>
<div class="t" style="left:5px;top:611px;color:#6600cc;margin-top:0;letter-spacing:-0.087px;">pid.z.output</div>
<div class="t" style="left:5px;top:626px;color:#6600cc;margin-top:0;letter-spacing:-0.047px;">500m/div</div>
<svg id="scope2" style="position:absolute;left:0;top:129px" width="1772" height="857" viewBox="0 129 1772 857" shape-rendering="crispEdges">
<rect x="0" y="556" width="1772" height="3" fill="#888"/>
<g transform="translate(0,0.5)" fill="none" stroke-width="1">
<path d="M471 344h9M464 345h7M480 345h7M463 346h1M487 346h1M463 347h1M488 347h1M462 348h1M489 348h1M461 349h1M490 349h6M461 350h1M496 350h1M455 351h6M497 351h1M455 352h1M497 352h1M454 353h1M498 353h1M454 354h1M499 354h6M453 355h1M505 355h1M453 356h1M505 356h1M452 357h1M506 357h1M452 358h1M506 358h1M451 359h1M507 359h1M446 360h6M507 360h1M446 361h1M508 361h6M445 362h1M513 362h1M445 363h1M514 363h1M445 364h1M514 364h1M444 365h1M514 365h1M444 366h1M515 366h1M444 367h1M515 367h1M444 368h1M516 368h1M443 369h1M516 369h1M443 370h1M516 370h1M443 371h1M517 371h1M442 372h1M517 372h6M437 373h6M522 373h1M437 374h1M523 374h1M437 375h1M523 375h1M436 376h1M523 376h1M436 377h1M524 377h1M436 378h1M524 378h1M436 379h1M524 379h1M435 380h1M524 380h1M435 381h1M525 381h1M435 382h1M525 382h1M435 383h1M525 383h1M434 384h1M526 384h1M434 385h1M526 385h6M434 386h1M531 386h1M434 387h1M532 387h1M433 388h1M532 388h1M428 389h6M532 389h1M428 390h1M532 390h1M428 391h1M533 391h1M427 392h1M533 392h1M427 393h1M533 393h1M427 394h1M534 394h1M427 395h1M534 395h1M426 396h1M534 396h1M426 397h1M534 397h1M426 398h1M535 398h1M426 399h1M535 399h6M425 400h1M540 400h1M425 401h1M540 401h1M425 402h1M541 402h1M425 403h1M541 403h1M424 404h1M541 404h1M419 405h6M541 405h1M419 406h1M542 406h1M419 407h1M542 407h1M419 408h1M542 408h1M418 409h1M542 409h1M418 410h1M542 410h1M418 411h1M543 411h1M418 412h1M543 412h1M418 413h1M543 413h6M418 414h1M548 414h1M418 415h1M549 415h1M418 416h1M549 416h1M417 417h1M549 417h1M417 418h1M549 418h1M417 419h1M550 419h1M417 420h1M550 420h1M417 421h1M550 421h1M417 422h1M550 422h1M417 423h1M551 423h1M416 424h1M551 424h1M416 425h1M551 425h1M416 426h1M551 426h1M411 427h6M552 427h1M411 428h1M552 428h6M411 429h1M557 429h1M410 430h1M558 430h1M410 431h1M558 431h1M410 432h1M558 432h1M410 433h1M558 433h1M410 434h1M559 434h1M409 435h1M559 435h1M409 436h1M559 436h1M409 437h1M559 437h1M409 438h1M560 438h1M409 439h1M560 439h1M409 440h1M560 440h1M408 441h1M560 441h1M408 442h1M561 442h1M408 443h1M561 443h6M408 444h1M566 444h1M408 445h1M567 445h1M407 446h1M567 446h1M407 447h1M567 447h1M402 448h6M567 448h1M402 449h1M568 449h1M402 450h1M568 450h1M401 451h1M568 451h1M401 452h1M568 452h1M401 453h1M569 453h1M401 454h1M569 454h1M401 455h1M569 455h1M400 456h1M569 456h1M400 457h1M570 457h1M400 458h1M570 458h1M400 459h1M570 459h6M400 460h1M575 460h1M399 461h1M576 461h1M399 462h1M576 462h1M399 463h1M576 463h1M399 464h1M576 464h1M399 465h1M577 465h1M398 466h1M577 466h1M398 467h1M577 467h1M393 468h6M577 468h1M393 469h1M578 469h1M393 470h1M578 470h1M392 471h1M578 471h1M392 472h1M578 472h1M392 473h1M579 473h1M392 474h1M579 474h1M392 475h1M579 475h6M391 476h1M584 476h1M391 477h1M584 477h1M391 478h1M585 478h1M391 479h1M585 479h1M391 480h1M585 480h1M391 481h1M585 481h1M390 482h1M586 482h1M390 483h1M586 483h1M390 484h1M586 484h1M390 485h1M586 485h1M390 486h1M587 486h1M389 487h1M587 487h1M389 488h1M587 488h1M384 489h6M587 489h1M384 490h1M588 490h1M384 491h1M588 491h1M384 492h1M588 492h6M383 493h1M593 493h1M383 494h1M593 494h1M383 495h1M594 495h1M383 496h1M594 496h1M383 497h1M594 497h1M383 498h1M594 498h1M382 499h1M594 499h1M382 500h1M595 500h1M382 501h1M595 501h1M382 502h1M595 502h1M382 503h1M595 503h1M382 504h1M595 504h1M381 505h1M596 505h1M381 506h1M596 506h1M381 507h1M596 507h6M381 508h1M601 508h1M381 509h1M602 509h1M381 510h1M602 510h1M380 511h1M602 511h1M380 512h1M602 512h1M375 513h6M603 513h1M375 514h1M603 514h1M375 515h1M603 515h1M374 516h1M603 516h1M374 517h1M604 517h1M374 518h1M604 518h1M374 519h1M604 519h1M374 520h1M604 520h1M1011 520h26M373 521h1M605 521h1M1002 521h9M1037 521h18M373 522h1M605 522h6M993 522h9M1055 522h8M373 523h1M610 523h1M985 523h8M1063 523h2M373 524h1M611 524h1M983 524h2M1065 524h8M373 525h1M611 525h1M977 525h6M1073 525h8M372 526h1M611 526h1M975 526h2M1081 526h1M372 527h1M611 527h1M974 527h1M1082 527h2M372 528h1M612 528h1M968 528h6M1084 528h6M372 529h1M612 529h1M966 529h2M1090 529h2M372 530h1M612 530h1M960 530h6M1092 530h6M371 531h1M613 531h1M958 531h2M1098 531h2M371 532h1M613 532h1M957 532h1M1100 532h7M366 533h6M613 533h1M951 533h6M1107 533h2M366 534h1M613 534h1M949 534h2M1109 534h7M365 535h1M614 535h1M948 535h1M1116 535h2M365 536h1M614 536h6M942 536h6M1118 536h7M365 537h1M619 537h1M941 537h1M1125 537h2M364 538h1M620 538h1M940 538h1M1127 538h7M364 539h1M620 539h1M939 539h1M1134 539h2M364 540h1M620 540h1M933 540h6M1136 540h7M363 541h1M620 541h1M932 541h1M1143 541h1M363 542h1M621 542h1M931 542h1M1144 542h1M363 543h1M621 543h1M930 543h1M1144 543h1M362 544h1M621 544h1M924 544h6M1145 544h7M357 545h6M622 545h1M923 545h1M1152 545h8M357 546h1M622 546h1M922 546h1M1160 546h1M356 547h1M622 547h1M921 547h1M1161 547h2M356 548h1M622 548h1M915 548h6M1163 548h7M355 549h1M623 549h1M914 549h1M1170 549h8M1560 549h35M355 550h1M623 550h6M914 550h1M1178 550h2M1542 550h18M1595 550h27M354 551h1M628 551h1M913 551h1M1180 551h7M1516 551h26M1622 551h18M354 552h1M629 552h1M912 552h1M1187 552h1M1507 552h9M1640 552h17M353 553h1M629 553h1M912 553h1M1188 553h2M1498 553h9M1657 553h9M347 554h7M629 554h1M906 554h6M1190 554h7M1489 554h9M1666 554h18M345 555h2M630 555h1M905 555h1M1197 555h8M1480 555h9M1684 555h18M0 556h37M99 556h115M302 556h43M630 556h1M905 556h1M1205 556h2M1471 556h9M1702 556h8M37 557h62M214 557h88M630 557h1M904 557h1M1207 557h6M1463 557h8M1710 557h17M630 558h1M904 558h1M1213 558h2M1461 558h2M1727 558h2M631 559h1M898 559h6M1215 559h7M1454 559h7M1729 559h43M631 560h1M897 560h1M1222 560h2M1445 560h9M631 561h1M897 561h1M1224 561h7M1436 561h9M632 562h1M896 562h1M1231 562h2M1427 562h9M632 563h6M895 563h1M1233 563h8M1418 563h9M637 564h1M895 564h1M1241 564h9M1409 564h9M638 565h1M889 565h6M1250 565h9M1400 565h9M638 566h1M888 566h1M1259 566h9M1383 566h17M638 567h1M887 567h1M1268 567h8M1374 567h9M639 568h1M887 568h1M1276 568h18M1356 568h18M639 569h1M886 569h1M1294 569h62M639 570h1M880 570h6M640 571h1M879 571h1M640 572h1M879 572h1M640 573h1M878 573h1M641 574h1M878 574h1M641 575h6M877 575h1M646 576h1M877 576h1M647 577h1M871 577h6M647 578h1M870 578h1M648 579h1M870 579h1M648 580h1M869 580h1M648 581h1M868 581h1M649 582h1M868 582h1M649 583h1M862 583h6M650 584h1M861 584h1M650 585h6M861 585h1M655 586h1M860 586h1M656 587h1M860 587h1M656 588h1M859 588h1M656 589h1M859 589h1M657 590h1M853 590h6M657 591h1M852 591h1M657 592h1M852 592h1M657 593h1M851 593h1M658 594h1M850 594h1M658 595h6M850 595h1M663 596h1M844 596h6M664 597h1M844 597h1M664 598h1M843 598h1M665 599h1M843 599h1M665 600h1M842 600h1M665 601h1M842 601h1M666 602h1M836 602h6M666 603h1M835 603h1M667 604h1M835 604h1M667 605h6M834 605h1M673 606h1M833 606h1M673 607h1M833 607h1M674 608h1M827 608h6M674 609h1M826 609h1M675 610h1M825 610h1M675 611h1M825 611h1M676 612h1M824 612h1M676 613h6M818 613h6M682 614h1M817 614h1M682 615h1M817 615h1M683 616h1M816 616h1M683 617h1M815 617h1M684 618h1M815 618h1M684 619h1M809 619h6M685 620h1M808 620h1M685 621h6M807 621h1M691 622h1M807 622h1M691 623h1M806 623h1M692 624h1M800 624h6M693 625h1M799 625h1M693 626h1M798 626h1M694 627h6M797 627h1M700 628h1M791 628h6M701 629h1M790 629h1M701 630h1M789 630h1M702 631h1M788 631h1M703 632h6M782 632h6M709 633h1M781 633h1M710 634h1M781 634h1M711 635h1M780 635h1M712 636h6M773 636h7M718 637h1M771 637h2M719 638h1M764 638h7M720 639h6M762 639h2M726 640h2M754 640h8M728 641h8M745 641h9M736 642h9" stroke="#cc0000"/>
<path d="M570 293h6M570 294h1M575 294h1M570 295h1M576 295h1M588 295h6M569 296h1M576 296h1M588 296h1M593 296h1M569 297h1M576 297h1M587 297h1M593 297h1M569 298h1M577 298h1M587 298h1M594 298h1M569 299h1M577 299h1M587 299h1M594 299h1M568 300h1M577 300h1M586 300h1M594 300h1M568 301h1M577 301h1M586 301h1M594 301h1M568 302h1M578 302h1M585 302h1M594 302h1M568 303h1M578 303h1M585 303h1M594 303h1M568 304h1M578 304h1M585 304h1M595 304h1M567 305h1M579 305h1M584 305h1M595 305h1M567 306h1M579 306h6M595 306h1M567 307h1M595 307h1M567 308h1M595 308h1M566 309h1M595 309h1M566 310h1M596 310h1M561 311h6M596 311h1M560 312h1M596 312h1M560 313h1M596 313h6M559 314h1M602 314h2M558 315h1M604 315h7M558 316h1M610 316h1M552 317h6M611 317h1M552 318h1M611 318h1M551 319h1M611 319h1M551 320h1M611 320h1M551 321h1M612 321h1M550 322h1M612 322h1M550 323h1M612 323h1M550 324h1M612 324h1M550 325h1M613 325h1M549 326h1M613 326h1M549 327h1M613 327h1M549 328h1M613 328h1M548 329h1M614 329h1M543 330h6M614 330h1M543 331h1M614 331h6M543 332h1M619 332h1M542 333h1M620 333h1M542 334h1M620 334h1M542 335h1M620 335h1M542 336h1M620 336h1M542 337h1M621 337h1M541 338h1M621 338h1M541 339h1M621 339h1M541 340h1M621 340h1M541 341h1M622 341h1M540 342h1M622 342h1M540 343h1M622 343h1M535 344h6M622 344h1M535 345h1M623 345h1M534 346h1M623 346h7M534 347h1M630 347h8M534 348h1M637 348h1M533 349h1M637 349h1M533 350h1M638 350h1M533 351h1M638 351h1M533 352h1M638 352h1M532 353h1M638 353h1M532 354h1M638 354h1M532 355h1M638 355h1M531 356h1M639 356h1M526 357h6M639 357h1M526 358h1M639 358h1M526 359h1M639 359h1M526 360h1M639 360h1M526 361h1M640 361h1M525 362h1M640 362h1M525 363h1M640 363h1M525 364h1M640 364h1M525 365h1M640 365h1M525 366h1M640 366h1M525 367h1M641 367h1M525 368h1M641 368h1M525 369h1M641 369h6M524 370h1M646 370h1M524 371h1M647 371h1M524 372h1M647 372h1M524 373h1M647 373h1M524 374h1M648 374h1M524 375h1M648 375h1M524 376h1M648 376h1M524 377h1M648 377h1M523 378h1M649 378h1M523 379h1M649 379h1M523 380h1M649 380h1M523 381h1M650 381h1M523 382h1M650 382h6M523 383h1M655 383h1M523 384h1M655 384h1M523 385h1M656 385h1M522 386h1M656 386h1M522 387h1M656 387h1M522 388h1M656 388h1M522 389h1M656 389h1M517 390h6M656 390h1M517 391h1M657 391h1M517 392h1M657 392h1M517 393h1M657 393h1M517 394h1M657 394h1M517 395h1M657 395h1M516 396h1M657 396h1M516 397h1M658 397h1M516 398h1M658 398h1M516 399h1M658 399h1M516 400h1M658 400h6M516 401h1M664 401h1M516 402h1M665 402h2M674 402h8M516 403h1M667 403h7M681 403h1M516 404h1M681 404h1M516 405h1M681 405h1M516 406h1M681 406h1M515 407h1M681 407h1M515 408h1M682 408h1M515 409h1M682 409h1M515 410h1M682 410h1M515 411h1M682 411h1M515 412h1M682 412h1M515 413h1M682 413h1M515 414h1M682 414h1M515 415h1M682 415h1M515 416h1M682 416h1M515 417h1M682 417h1M515 418h1M683 418h1M514 419h1M683 419h1M514 420h1M683 420h1M514 421h1M683 421h1M514 422h1M683 422h1M514 423h1M683 423h1M514 424h1M683 424h1M514 425h1M683 425h1M514 426h1M683 426h1M514 427h1M683 427h1M514 428h1M684 428h1M514 429h1M684 429h1M513 430h1M684 430h1M513 431h1M684 431h1M513 432h1M684 432h1M513 433h1M684 433h1M513 434h1M684 434h1M508 435h6M684 435h1M508 436h1M684 436h1M508 437h1M684 437h1M508 438h1M685 438h1M508 439h1M685 439h1M507 440h1M685 440h1M507 441h1M685 441h1M507 442h1M685 442h1M507 443h1M685 443h6M507 444h1M690 444h1M507 445h1M690 445h1M507 446h1M691 446h1M507 447h1M691 447h1M507 448h1M691 448h1M506 449h1M691 449h1M506 450h1M691 450h1M506 451h1M691 451h1M506 452h1M692 452h1M506 453h1M692 453h1M506 454h1M692 454h1M506 455h1M692 455h1M506 456h1M692 456h1M505 457h1M692 457h1M505 458h1M693 458h1M505 459h1M693 459h1M505 460h1M693 460h1M505 461h1M693 461h1M505 462h1M693 462h1M505 463h1M693 463h1M505 464h1M694 464h1M505 465h1M694 465h1M504 466h1M694 466h6M504 467h1M700 467h1M504 468h1M700 468h1M504 469h1M701 469h1M499 470h6M701 470h1M499 471h1M702 471h1M499 472h1M702 472h1M499 473h1M703 473h6M499 474h1M708 474h1M499 475h1M708 475h1M498 476h1M709 476h1M498 477h1M709 477h1M498 478h1M709 478h1M498 479h1M709 479h1M498 480h1M709 480h1M498 481h1M709 481h1M498 482h1M710 482h1M498 483h1M710 483h1M498 484h1M710 484h1M498 485h1M710 485h1M498 486h1M710 486h1M497 487h1M710 487h1M497 488h1M711 488h1M497 489h1M711 489h1M497 490h1M711 490h1M497 491h1M711 491h1M497 492h1M711 492h1M497 493h1M711 493h1M497 494h1M712 494h1M497 495h1M712 495h1M497 496h1M712 496h6M497 497h1M717 497h1M497 498h1M718 498h1M496 499h1M718 499h1M496 500h1M718 500h1M496 501h1M718 501h1M496 502h1M719 502h1M496 503h1M719 503h1M496 504h1M719 504h1M496 505h1M719 505h1M496 506h1M720 506h1M496 507h1M720 507h1M496 508h1M720 508h6M496 509h1M725 509h1M495 510h1M726 510h1M495 511h1M726 511h1M495 512h1M726 512h1M495 513h1M727 513h1M1145 513h6M495 514h1M727 514h1M1145 514h1M1150 514h1M490 515h6M728 515h1M1144 515h1M1150 515h1M490 516h1M728 516h1M1144 516h1M1151 516h1M490 517h1M728 517h1M1143 517h1M1151 517h1M490 518h1M729 518h1M1143 518h1M1151 518h1M490 519h1M729 519h6M1136 519h7M1151 519h1M1163 519h6M1181 519h6M490 520h1M734 520h1M1134 520h2M1152 520h1M1163 520h1M1169 520h1M1181 520h1M1187 520h2M489 521h1M734 521h1M1101 521h6M1127 521h7M1152 521h1M1162 521h1M1169 521h1M1180 521h1M1189 521h7M489 522h1M735 522h1M1099 522h2M1107 522h1M1125 522h2M1152 522h1M1162 522h1M1170 522h1M1180 522h1M1196 522h1M489 523h1M735 523h1M1098 523h1M1107 523h1M1119 523h6M1152 523h1M1162 523h1M1170 523h1M1179 523h1M1197 523h1M489 524h1M735 524h1M1092 524h6M1108 524h1M1118 524h1M1152 524h1M1161 524h1M1171 524h1M1179 524h1M1198 524h1M489 525h1M735 525h1M1091 525h1M1109 525h1M1117 525h1M1153 525h1M1161 525h1M1171 525h1M1178 525h1M1199 525h6M489 526h1M735 526h1M1091 526h1M1109 526h1M1116 526h1M1153 526h1M1161 526h1M1172 526h1M1178 526h1M1205 526h1M1216 526h6M489 527h1M735 527h1M1090 527h1M1110 527h6M1153 527h1M1160 527h1M1172 527h6M1205 527h1M1215 527h1M1221 527h1M489 528h1M736 528h1M1084 528h6M1153 528h1M1160 528h1M1206 528h1M1214 528h1M1222 528h1M489 529h1M736 529h1M1084 529h1M1154 529h1M1160 529h1M1206 529h1M1214 529h1M1222 529h1M489 530h1M736 530h1M1083 530h1M1154 530h1M1159 530h1M1207 530h1M1213 530h1M1222 530h1M489 531h1M736 531h1M1083 531h1M1154 531h6M1207 531h6M1223 531h1M488 532h1M736 532h1M1082 532h1M1223 532h1M1234 532h6M488 533h1M737 533h1M1082 533h1M1223 533h1M1233 533h1M1240 533h1M488 534h1M737 534h1M1081 534h1M1224 534h1M1233 534h1M1241 534h2M488 535h1M737 535h1M1081 535h1M1224 535h1M1232 535h1M1243 535h24M488 536h1M737 536h1M1075 536h6M1224 536h1M1231 536h1M1267 536h1M488 537h1M737 537h1M1073 537h2M1225 537h1M1231 537h1M1267 537h1M488 538h1M737 538h1M1072 538h1M1225 538h6M1268 538h1M488 539h1M738 539h1M1066 539h6M1268 539h1M488 540h1M738 540h1M1065 540h1M1269 540h1M488 541h1M738 541h6M1064 541h1M1269 541h6M487 542h1M743 542h1M1064 542h1M1275 542h1M487 543h1M743 543h1M1063 543h1M1276 543h1M487 544h1M744 544h1M1057 544h6M1276 544h1M1685 544h7M487 545h1M744 545h1M1057 545h1M1277 545h1M1683 545h2M1692 545h1M487 546h1M744 546h1M1056 546h1M1278 546h25M1659 546h24M1693 546h1M487 547h1M744 547h1M1056 547h1M1303 547h8M1658 547h1M1694 547h1M487 548h1M745 548h1M1056 548h1M1311 548h1M1657 548h1M1695 548h33M487 549h1M745 549h1M1056 549h1M1312 549h1M1657 549h1M1728 549h18M487 550h1M745 550h1M1055 550h1M1313 550h1M1656 550h1M1746 550h8M487 551h1M745 551h1M1055 551h1M1314 551h6M1624 551h32M1754 551h2M487 552h1M746 552h1M1055 552h1M1320 552h2M1623 552h1M1756 552h7M486 553h1M746 553h1M1054 553h1M1322 553h8M1623 553h1M1763 553h9M486 554h1M746 554h1M1054 554h1M1330 554h8M1622 554h1M486 555h1M746 555h1M1054 555h1M1338 555h17M1622 555h1M486 556h1M747 556h1M1054 556h1M1355 556h1M1621 556h1M486 557h1M747 557h1M1053 557h1M1356 557h2M1621 557h1M0 558h345M481 558h6M747 558h6M1039 558h15M1358 558h15M1597 558h24M345 559h1M481 559h1M752 559h1M1039 559h1M1372 559h1M1596 559h1M345 560h1M481 560h1M753 560h1M1038 560h1M1373 560h1M1595 560h1M346 561h1M480 561h1M753 561h1M1038 561h1M1373 561h1M1595 561h1M347 562h1M480 562h1M753 562h1M1037 562h1M1374 562h1M1594 562h1M347 563h1M480 563h1M754 563h1M1037 563h1M1374 563h1M1586 563h8M348 564h6M480 564h1M754 564h1M1036 564h1M1375 564h1M1561 564h25M353 565h1M480 565h1M754 565h1M1036 565h1M1375 565h1M1559 565h2M353 566h1M479 566h1M755 566h1M1030 566h6M1376 566h1M1535 566h24M353 567h1M479 567h1M755 567h1M1028 567h2M1376 567h23M1534 567h1M353 568h1M479 568h1M755 568h1M1013 568h15M1399 568h1M1533 568h1M353 569h1M479 569h1M756 569h1M1013 569h1M1400 569h1M1429 569h6M1533 569h1M353 570h1M479 570h1M756 570h6M1012 570h1M1401 570h1M1429 570h1M1434 570h1M1532 570h1M353 571h1M478 571h1M761 571h1M1012 571h1M1402 571h6M1428 571h1M1435 571h1M1455 571h6M1491 571h6M1517 571h15M353 572h1M478 572h1M761 572h1M1011 572h1M1408 572h1M1428 572h1M1435 572h1M1454 572h1M1460 572h1M1489 572h2M1497 572h1M1516 572h1M353 573h1M473 573h6M762 573h1M1011 573h1M1409 573h2M1428 573h1M1435 573h1M1453 573h1M1461 573h1M1488 573h1M1498 573h2M1515 573h1M353 574h1M473 574h1M762 574h1M1011 574h1M1411 574h6M1427 574h1M1436 574h1M1447 574h6M1461 574h1M1473 574h15M1500 574h15M353 575h1M473 575h1M762 575h1M1010 575h1M1417 575h1M1427 575h1M1436 575h1M1446 575h1M1462 575h1M1472 575h1M353 576h1M473 576h1M762 576h1M1010 576h1M1417 576h1M1426 576h1M1437 576h1M1446 576h1M1462 576h1M1472 576h1M353 577h1M473 577h1M762 577h1M1009 577h1M1418 577h1M1426 577h1M1437 577h1M1445 577h1M1463 577h1M1471 577h1M353 578h1M473 578h1M763 578h1M1004 578h6M1419 578h1M1426 578h1M1437 578h1M1444 578h1M1463 578h1M1470 578h1M353 579h1M473 579h1M763 579h1M1004 579h1M1419 579h1M1425 579h1M1438 579h1M1444 579h1M1464 579h1M1470 579h1M353 580h1M473 580h1M763 580h1M1003 580h1M1420 580h6M1438 580h6M1464 580h6M354 581h1M473 581h1M763 581h1M1003 581h1M354 582h1M472 582h1M763 582h1M1003 582h1M354 583h1M472 583h1M764 583h1M1002 583h1M354 584h1M472 584h1M764 584h1M986 584h6M1002 584h1M354 585h1M472 585h1M764 585h1M986 585h1M992 585h1M1002 585h1M354 586h1M472 586h1M764 586h1M986 586h1M992 586h1M1002 586h1M354 587h1M472 587h1M764 587h1M774 587h6M985 587h1M993 587h1M1001 587h1M354 588h1M472 588h1M765 588h1M772 588h2M779 588h1M985 588h1M993 588h1M1001 588h1M354 589h1M472 589h1M765 589h1M771 589h1M779 589h1M985 589h1M994 589h1M1001 589h1M354 590h1M472 590h1M765 590h6M779 590h1M985 590h1M994 590h1M1000 590h1M354 591h1M472 591h1M780 591h1M984 591h1M995 591h6M354 592h1M472 592h1M780 592h1M984 592h1M354 593h1M472 593h1M780 593h1M984 593h1M354 594h1M472 594h1M780 594h1M984 594h1M354 595h1M472 595h1M780 595h1M984 595h1M354 596h1M472 596h1M780 596h1M968 596h6M983 596h1M354 597h1M472 597h1M780 597h1M968 597h1M974 597h1M983 597h1M354 598h1M472 598h1M781 598h1M967 598h1M974 598h1M983 598h1M354 599h1M472 599h1M781 599h1M967 599h1M975 599h1M983 599h1M354 600h1M471 600h1M781 600h1M966 600h1M976 600h1M982 600h1M354 601h1M471 601h1M781 601h1M966 601h1M976 601h1M982 601h1M354 602h1M471 602h1M781 602h1M960 602h6M977 602h6M354 603h1M471 603h1M781 603h1M960 603h1M354 604h1M471 604h1M781 604h1M959 604h1M354 605h1M471 605h1M782 605h1M959 605h1M354 606h1M471 606h1M782 606h1M959 606h1M354 607h1M471 607h1M782 607h1M958 607h1M354 608h1M471 608h1M782 608h6M958 608h1M354 609h1M471 609h1M788 609h1M957 609h1M354 610h1M471 610h1M789 610h1M957 610h1M354 611h1M471 611h1M789 611h1M957 611h1M354 612h1M471 612h1M790 612h1M956 612h1M354 613h1M471 613h1M791 613h6M951 613h6M355 614h1M471 614h1M796 614h1M950 614h1M355 615h1M471 615h1M796 615h1M950 615h1M355 616h1M471 616h1M797 616h1M949 616h1M355 617h1M470 617h1M797 617h1M949 617h1M355 618h1M470 618h1M797 618h1M948 618h1M355 619h1M470 619h1M797 619h1M948 619h1M355 620h1M470 620h1M797 620h1M942 620h6M355 621h1M470 621h1M798 621h1M941 621h1M355 622h1M470 622h1M798 622h1M940 622h1M355 623h1M470 623h1M798 623h1M939 623h1M355 624h1M470 624h1M798 624h1M933 624h6M355 625h1M470 625h1M798 625h1M931 625h2M355 626h1M470 626h1M798 626h1M930 626h1M355 627h1M470 627h1M799 627h1M924 627h6M355 628h1M470 628h1M799 628h1M924 628h1M355 629h1M470 629h1M799 629h1M924 629h1M355 630h1M470 630h1M799 630h1M923 630h1M355 631h1M470 631h1M799 631h1M923 631h1M355 632h1M470 632h1M800 632h1M923 632h1M355 633h1M470 633h1M800 633h1M923 633h1M355 634h1M470 634h1M800 634h6M923 634h1M355 635h1M469 635h1M806 635h1M922 635h1M355 636h1M469 636h1M806 636h1M922 636h1M355 637h1M469 637h1M807 637h1M922 637h1M355 638h1M469 638h1M808 638h1M906 638h6M922 638h1M355 639h1M469 639h1M808 639h1M906 639h1M911 639h1M922 639h1M355 640h1M469 640h1M809 640h6M906 640h1M912 640h1M921 640h1M355 641h1M469 641h1M815 641h2M905 641h1M912 641h1M921 641h1M355 642h1M469 642h1M817 642h8M905 642h1M913 642h1M921 642h1M355 643h1M464 643h6M825 643h8M905 643h1M913 643h1M921 643h1M355 644h1M464 644h1M833 644h1M905 644h1M914 644h1M921 644h1M355 645h1M464 645h1M833 645h1M904 645h1M914 645h1M920 645h1M356 646h1M464 646h1M834 646h1M904 646h1M915 646h1M920 646h1M356 647h1M464 647h1M834 647h1M904 647h1M915 647h6M356 648h1M464 648h1M835 648h1M904 648h1M356 649h1M464 649h1M835 649h1M903 649h1M356 650h1M464 650h1M836 650h1M889 650h7M903 650h1M356 651h1M464 651h1M836 651h6M889 651h1M896 651h8M356 652h1M464 652h1M841 652h1M888 652h1M356 653h1M464 653h1M842 653h1M888 653h1M356 654h1M463 654h1M842 654h1M853 654h6M888 654h1M356 655h1M463 655h1M843 655h1M852 655h1M858 655h1M871 655h6M887 655h1M356 656h1M463 656h1M843 656h1M851 656h1M859 656h1M871 656h1M877 656h1M887 656h1M356 657h1M463 657h1M844 657h1M850 657h1M859 657h1M870 657h1M877 657h1M887 657h1M356 658h1M463 658h1M844 658h6M859 658h1M870 658h1M878 658h1M887 658h1M356 659h1M463 659h1M860 659h1M870 659h1M878 659h1M886 659h1M356 660h1M463 660h1M860 660h1M869 660h1M879 660h1M886 660h1M356 661h1M463 661h1M860 661h1M869 661h1M879 661h1M886 661h1M356 662h1M463 662h1M860 662h1M869 662h1M880 662h1M885 662h1M356 663h1M463 663h1M861 663h1M868 663h1M880 663h6M356 664h1M463 664h1M861 664h1M868 664h1M356 665h1M463 665h1M861 665h1M868 665h1M356 666h1M463 666h1M862 666h1M867 666h1M356 667h1M463 667h1M862 667h6M356 668h1M463 668h1M356 669h1M463 669h1M356 670h1M463 670h1M356 671h1M463 671h1M356 672h1M463 672h1M356 673h1M463 673h1M356 674h1M462 674h1M356 675h1M462 675h1M356 676h1M462 676h1M356 677h1M462 677h1M356 678h1M462 678h1M357 679h1M462 679h1M357 680h1M462 680h1M357 681h1M462 681h1M357 682h1M462 682h1M357 683h1M462 683h1M357 684h1M462 684h1M357 685h1M462 685h1M357 686h1M462 686h1M357 687h1M462 687h1M357 688h1M462 688h1M357 689h1M462 689h1M357 690h1M462 690h1M357 691h1M462 691h1M357 692h1M462 692h1M357 693h1M462 693h1M357 694h1M461 694h1M357 695h6M461 695h1M362 696h1M461 696h1M362 697h1M461 697h1M362 698h1M461 698h1M362 699h1M461 699h1M362 700h1M461 700h1M362 701h1M461 701h1M363 702h1M461 702h1M363 703h1M461 703h1M363 704h1M461 704h1M363 705h1M461 705h1M363 706h1M461 706h1M363 707h1M461 707h1M363 708h1M461 708h1M363 709h1M461 709h1M363 710h1M461 710h1M363 711h1M461 711h1M363 712h1M461 712h1M363 713h1M461 713h1M364 714h1M460 714h1M364 715h1M460 715h1M364 716h1M460 716h1M364 717h1M460 717h1M364 718h1M460 718h1M364 719h1M460 719h1M364 720h1M460 720h1M364 721h1M460 721h1M364 722h1M460 722h1M364 723h1M455 723h6M364 724h1M455 724h1M364 725h1M455 725h1M365 726h1M455 726h1M365 727h1M455 727h1M365 728h1M455 728h1M365 729h1M454 729h1M365 730h1M454 730h1M365 731h1M454 731h1M365 732h1M454 732h1M365 733h1M454 733h1M365 734h1M454 734h1M365 735h1M454 735h1M365 736h1M454 736h1M365 737h1M454 737h1M366 738h1M454 738h1M366 739h1M454 739h1M366 740h1M453 740h1M366 741h1M453 741h1M366 742h1M453 742h1M366 743h1M453 743h1M366 744h6M453 744h1M371 745h1M453 745h1M371 746h1M453 746h1M371 747h1M453 747h1M371 748h1M453 748h1M371 749h1M453 749h1M371 750h1M453 750h1M371 751h1M452 751h1M371 752h1M452 752h1M371 753h1M452 753h1M371 754h1M452 754h1M371 755h1M452 755h1M371 756h1M452 756h1M371 757h1M452 757h1M371 758h1M452 758h1M371 759h1M452 759h1M371 760h1M452 760h1M372 761h1M452 761h1M372 762h1M451 762h1M372 763h1M451 763h1M372 764h1M451 764h1M372 765h1M451 765h1M372 766h1M451 766h1M372 767h1M446 767h6M372 768h1M446 768h1M372 769h1M446 769h1M372 770h1M446 770h1M372 771h1M446 771h1M372 772h1M446 772h1M372 773h1M446 773h1M372 774h1M445 774h1M372 775h1M445 775h1M372 776h1M445 776h1M372 777h1M445 777h1M372 778h1M445 778h1M372 779h1M445 779h1M372 780h1M445 780h1M372 781h1M445 781h1M372 782h1M445 782h1M372 783h1M445 783h1M372 784h1M445 784h1M372 785h1M445 785h1M372 786h1M445 786h1M372 787h1M444 787h1M372 788h1M444 788h1M372 789h1M444 789h1M372 790h1M444 790h1M372 791h1M444 791h1M372 792h1M444 792h1M372 793h1M444 793h1M372 794h1M444 794h1M373 795h1M444 795h1M373 796h1M444 796h1M373 797h1M444 797h1M373 798h1M444 798h1M373 799h1M444 799h1M373 800h1M443 800h1M373 801h1M443 801h1M373 802h1M443 802h1M373 803h1M443 803h1M373 804h1M443 804h1M373 805h1M443 805h1M373 806h1M443 806h1M373 807h1M443 807h1M373 808h1M443 808h1M373 809h1M443 809h1M373 810h1M443 810h1M373 811h1M443 811h1M373 812h1M443 812h1M373 813h1M442 813h1M373 814h1M442 814h1M373 815h1M442 815h1M373 816h1M428 816h6M442 816h1M373 817h1M428 817h1M434 817h1M442 817h1M373 818h1M428 818h1M435 818h2M442 818h1M373 819h1M428 819h1M437 819h6M373 820h1M428 820h1M373 821h1M428 821h1M373 822h1M428 822h1M373 823h1M428 823h1M373 824h1M428 824h1M373 825h1M427 825h1M373 826h1M427 826h1M373 827h1M427 827h1M373 828h1M427 828h1M374 829h1M427 829h1M374 830h1M427 830h1M374 831h1M427 831h1M374 832h1M427 832h1M374 833h1M427 833h1M374 834h1M427 834h1M374 835h1M427 835h1M374 836h1M427 836h1M374 837h1M427 837h1M374 838h1M427 838h1M374 839h1M427 839h1M374 840h1M427 840h1M374 841h1M427 841h1M374 842h1M426 842h1M374 843h1M426 843h1M374 844h1M426 844h1M374 845h1M426 845h1M374 846h1M426 846h1M374 847h1M426 847h1M374 848h1M426 848h1M374 849h1M426 849h1M374 850h1M426 850h1M374 851h1M426 851h1M374 852h1M426 852h1M374 853h1M426 853h1M374 854h1M426 854h1M374 855h1M426 855h1M374 856h1M426 856h1M374 857h1M426 857h1M374 858h1M426 858h1M374 859h1M426 859h1M374 860h1M425 860h1M374 861h1M425 861h1M374 862h1M425 862h1M375 863h1M425 863h1M375 864h1M425 864h1M375 865h1M425 865h1M375 866h1M425 866h1M375 867h1M425 867h1M375 868h1M425 868h1M375 869h1M425 869h1M375 870h1M425 870h1M375 871h1M425 871h1M375 872h1M402 872h6M425 872h1M375 873h1M402 873h1M407 873h1M425 873h1M375 874h1M402 874h1M407 874h1M425 874h1M375 875h1M402 875h1M407 875h1M425 875h1M375 876h1M401 876h1M407 876h1M425 876h1M375 877h1M401 877h1M408 877h1M424 877h1M375 878h1M401 878h1M408 878h1M424 878h1M375 879h6M401 879h1M408 879h1M424 879h1M380 880h1M401 880h1M408 880h1M424 880h1M380 881h1M401 881h1M408 881h1M424 881h1M380 882h1M401 882h1M408 882h1M424 882h1M380 883h1M401 883h1M408 883h1M424 883h1M380 884h1M400 884h1M408 884h1M424 884h1M380 885h1M400 885h1M408 885h1M419 885h6M381 886h1M400 886h1M408 886h1M419 886h1M381 887h1M400 887h1M409 887h1M419 887h1M381 888h1M400 888h1M409 888h1M419 888h1M381 889h1M400 889h1M409 889h1M419 889h1M381 890h1M400 890h1M409 890h1M418 890h1M381 891h1M399 891h1M409 891h1M418 891h1M381 892h1M399 892h1M409 892h1M418 892h1M381 893h1M399 893h1M409 893h1M418 893h1M381 894h1M399 894h1M409 894h1M418 894h1M381 895h1M399 895h1M409 895h1M418 895h1M381 896h1M399 896h1M409 896h1M418 896h1M381 897h1M399 897h1M410 897h1M418 897h1M381 898h1M399 898h1M410 898h1M418 898h1M382 899h1M398 899h1M410 899h1M417 899h1M382 900h1M398 900h1M410 900h1M417 900h1M382 901h1M398 901h1M410 901h1M417 901h1M382 902h1M393 902h6M410 902h1M417 902h1M382 903h1M393 903h1M410 903h1M417 903h1M382 904h1M393 904h1M410 904h1M417 904h1M382 905h1M393 905h1M410 905h1M417 905h1M382 906h1M392 906h1M410 906h1M417 906h1M382 907h1M392 907h1M411 907h1M416 907h1M382 908h1M392 908h1M411 908h1M416 908h1M382 909h1M392 909h1M411 909h1M416 909h1M382 910h1M392 910h1M411 910h1M416 910h1M382 911h1M392 911h1M411 911h6M382 912h1M392 912h1M383 913h1M392 913h1M383 914h1M391 914h1M383 915h1M391 915h1M383 916h1M391 916h1M383 917h1M391 917h1M383 918h1M391 918h1M383 919h1M391 919h1M383 920h1M391 920h1M383 921h1M390 921h1M383 922h1M390 922h1M383 923h1M390 923h1M383 924h1M390 924h1M383 925h1M390 925h1M384 926h1M390 926h1M384 927h1M390 927h1M384 928h1M390 928h1M384 929h1M389 929h1M384 930h1M389 930h1M384 931h1M389 931h1M384 932h6" stroke="#00cccc"/>
<path d="M0 560H1772" stroke="#66cc00"/>
<path d="M471 434h9M464 435h7M480 435h8M462 436h2M488 436h8M461 437h1M496 437h1M455 438h6M497 438h1M454 439h1M498 439h1M453 440h1M499 440h6M453 441h1M505 441h1M452 442h1M506 442h1M446 443h6M507 443h1M446 444h1M508 444h6M445 445h1M514 445h1M445 446h1M514 446h1M444 447h1M515 447h1M444 448h1M516 448h1M443 449h1M516 449h1M443 450h1M517 450h6M437 451h6M523 451h1M437 452h1M523 452h1M436 453h1M524 453h1M436 454h1M524 454h1M435 455h1M525 455h1M435 456h1M525 456h1M434 457h1M526 457h1M434 458h1M526 458h6M433 459h1M532 459h1M428 460h6M532 460h1M428 461h1M533 461h1M427 462h1M533 462h1M427 463h1M534 463h1M426 464h1M534 464h1M426 465h1M535 465h1M425 466h1M535 466h6M425 467h1M540 467h1M424 468h1M541 468h1M419 469h6M541 469h1M419 470h1M542 470h1M419 471h1M542 471h1M418 472h1M542 472h1M418 473h1M543 473h1M418 474h1M543 474h6M418 475h1M549 475h1M417 476h1M549 476h1M417 477h1M550 477h1M417 478h1M550 478h1M417 479h1M551 479h1M416 480h1M551 480h1M416 481h1M552 481h1M411 482h6M552 482h6M411 483h1M557 483h1M410 484h1M558 484h1M410 485h1M558 485h1M410 486h1M559 486h1M409 487h1M559 487h1M409 488h1M560 488h1M409 489h1M560 489h1M408 490h1M561 490h1M408 491h1M561 491h6M408 492h1M566 492h1M407 493h1M567 493h1M402 494h6M567 494h1M402 495h1M568 495h1M401 496h1M568 496h1M401 497h1M569 497h1M401 498h1M569 498h1M400 499h1M570 499h1M400 500h1M570 500h6M399 501h1M575 501h1M399 502h1M576 502h1M399 503h1M576 503h1M398 504h1M577 504h1M393 505h6M577 505h1M393 506h1M578 506h1M392 507h1M578 507h1M392 508h1M579 508h1M392 509h1M579 509h6M391 510h1M584 510h1M391 511h1M585 511h1M391 512h1M585 512h1M391 513h1M586 513h1M390 514h1M586 514h1M390 515h1M586 515h1M390 516h1M587 516h1M389 517h1M587 517h1M384 518h6M588 518h1M384 519h1M588 519h6M383 520h1M593 520h1M383 521h1M594 521h1M383 522h1M594 522h1M383 523h1M594 523h1M382 524h1M595 524h1M382 525h1M595 525h1M382 526h1M595 526h1M381 527h1M596 527h1M381 528h1M596 528h6M381 529h1M601 529h1M381 530h1M602 530h1M380 531h1M602 531h1M375 532h6M603 532h1M375 533h1M603 533h1M374 534h1M604 534h1M374 535h1M604 535h1M374 536h1M605 536h1M1002 536h53M373 537h1M605 537h6M993 537h9M1055 537h8M373 538h1M611 538h1M984 538h9M1063 538h2M372 539h1M611 539h1M975 539h9M1065 539h17M372 540h1M612 540h1M967 540h8M1082 540h9M372 541h1M612 541h1M959 541h8M1091 541h7M371 542h1M613 542h1M957 542h2M1098 542h2M366 543h6M613 543h1M950 543h7M1100 543h8M365 544h1M614 544h1M948 544h2M1108 544h9M365 545h1M614 545h6M942 545h6M1117 545h9M364 546h1M620 546h1M940 546h2M1126 546h8M364 547h1M620 547h1M939 547h1M1134 547h2M363 548h1M621 548h1M932 548h7M1136 548h7M363 549h1M621 549h1M930 549h2M1143 549h2M357 550h6M622 550h1M923 550h7M1145 550h15M356 551h1M622 551h1M921 551h2M1160 551h2M356 552h1M623 552h1M915 552h6M1162 552h8M355 553h1M623 553h6M914 553h1M1170 553h9M1542 553h80M354 554h1M629 554h1M913 554h1M1179 554h8M1507 554h35M1622 554h35M354 555h1M629 555h1M912 555h1M1187 555h2M1498 555h9M1657 555h9M346 556h8M630 556h1M906 556h6M1189 556h16M1480 556h18M1666 556h36M0 557h37M99 557h115M302 557h44M630 557h1M905 557h1M1205 557h2M1471 557h9M1702 557h8M37 558h62M214 558h88M631 558h1M904 558h1M1207 558h7M1454 558h17M1710 558h53M631 559h1M898 559h6M1214 559h17M1436 559h18M1763 559h9M632 560h1M896 560h2M1231 560h2M1427 560h9M632 561h6M895 561h1M1233 561h17M1409 561h18M638 562h1M889 562h6M1250 562h9M1400 562h9M638 563h1M887 563h2M1259 563h17M1374 563h26M639 564h1M886 564h1M1276 564h98M639 565h1M880 565h6M640 566h1M879 566h1M640 567h1M878 567h1M641 568h6M877 568h1M647 569h1M871 569h6M647 570h1M870 570h1M648 571h1M869 571h1M649 572h1M868 572h1M649 573h1M862 573h6M650 574h6M860 574h2M656 575h1M859 575h1M656 576h1M853 576h6M657 577h1M852 577h1M657 578h1M851 578h1M658 579h6M850 579h1M664 580h1M844 580h6M664 581h1M843 581h1M665 582h1M843 582h1M666 583h1M842 583h1M666 584h1M836 584h6M667 585h6M834 585h2M673 586h1M833 586h1M674 587h1M827 587h6M674 588h1M825 588h2M675 589h1M824 589h1M676 590h6M818 590h6M682 591h1M816 591h2M683 592h1M815 592h1M684 593h1M809 593h6M685 594h6M807 594h2M691 595h1M806 595h1M692 596h1M800 596h6M693 597h1M798 597h2M694 598h6M797 598h1M700 599h1M790 599h7M701 600h2M788 600h2M703 601h6M782 601h6M709 602h2M780 602h2M711 603h7M772 603h8M718 604h2M763 604h9M720 605h7M754 605h9M727 606h9M745 606h9M736 607h9" stroke="#6600cc"/>
</g>
</svg>

<!-- channel buttons -->
<div class="chb" style="left:0px;width:110px;border:1px solid #7c0a0a;background:linear-gradient(#ae0b0b 0,#c60606 50%,#df0000 100%);box-shadow:inset 1px 0 0 #ff2626,inset -1px 0 0 #ff2626,inset 0 -1px 0 #ff2626,inset 0 1px 0 #9c0a0a;">1</div>
<div class="chb" style="left:110px;width:110px;border:1px solid #0a7e7e;background:linear-gradient(#07b2b2 0,#03c6c6 50%,#00dada 100%);box-shadow:inset 1px 0 0 #26ffff,inset -1px 0 0 #26ffff,inset 0 -1px 0 #26ffff,inset 0 1px 0 #099e9e;">2</div>
<div class="chb" style="left:220px;width:110px;border:1px solid #427e0a;background:linear-gradient(#5fb207 0,#67c603 50%,#70da00 100%);box-shadow:inset 1px 0 0 #8cff26,inset -1px 0 0 #8cff26,inset 0 -1px 0 #8cff26,inset 0 1px 0 #549e09;">3</div>
<div class="chb" style="left:330px;width:110px;border:1px solid #420a7e;background:linear-gradient(#5a07b2 0,#6203c6 50%,#6a00da 100%);box-shadow:inset 1px 0 0 #8626ff,inset -1px 0 0 #8626ff,inset 0 -1px 0 #8626ff,inset 0 1px 0 #50099e;">4</div>
<div class="chb chn" style="left:440px;width:110px;">5</div>
<div class="chb chn" style="left:550px;width:110px;">6</div>
<div class="chb chn" style="left:660px;width:110px;">7</div>
<div class="chb chn" style="left:770px;width:110px;">8</div>
<div class="chb chn" style="left:880px;width:110px;">9</div>
<div class="chb chn" style="left:990px;width:110px;">10</div>
<div class="chb chn" style="left:1100px;width:110px;">11</div>
<div class="chb chn" style="left:1210px;width:110px;">12</div>
<div class="chb chn" style="left:1320px;width:110px;">13</div>
<div class="chb chn" style="left:1430px;width:110px;">14</div>
<div class="chb chn" style="left:1540px;width:110px;">15</div>
<div class="chb chn" style="left:1650px;width:122px;">16</div>

<!-- Selected channel -->
<div class="frame" style="left:0;top:1017px;width:1771px;height:31px;"></div>
<div class="flab" style="left:4px;top:1009px;letter-spacing:-0.052px;">Selected Channel</div>
<div class="t" style="left:10px;top:1029px;letter-spacing:0.312px;">--</div>
<div class="vl" style="left:31px;top:1024px;height:23px;"></div>
<div class="btn" style="left:40px;top:1025px;width:383px;height:21px;"></div>
<div class="t c" style="left:40px;width:382px;top:1029px;letter-spacing:0.312px;">------</div>

<!-- Run mode -->
<div class="frame" style="left:1772px;top:57px;width:72px;height:80px;"></div>
<div class="flab" style="left:1776px;top:49px;letter-spacing:-0.131px;">Run Mode</div>
<svg class="a" style="left:1777px;top:67px" width="11" height="11" viewBox="0 0 11 11" shape-rendering="crispEdges"><path d="M3 0h5v1h1v1h1v1h1v5h-1v1h-1v1h-1v1h-5v-1h-1v-1h-1v-1h-1v-5h1v-1h1v-1h1z" fill="#a7a59c"/><path d="M3 1h5v1h1v1h1v5h-1v1h-1v1h-5v-1h-1v-1h-1v-5h1v-1h1z" fill="#fff"/><path d="M4 3h3v1h1v3h-1v1h-3v-1h-1v-3h1z" fill="#0a0a0a"/></svg><div class="t" style="left:1793px;top:65px;letter-spacing:0.125px;">Normal</div>
<svg class="a" style="left:1777px;top:85px" width="11" height="11" viewBox="0 0 11 11" shape-rendering="crispEdges"><path d="M3 0h5v1h1v1h1v1h1v5h-1v1h-1v1h-1v1h-5v-1h-1v-1h-1v-1h-1v-5h1v-1h1v-1h1z" fill="#a7a59c"/><path d="M3 1h5v1h1v1h1v5h-1v1h-1v1h-5v-1h-1v-1h-1v-5h1v-1h1z" fill="#fff"/></svg><div class="t" style="left:1793px;top:83px;letter-spacing:0.008px;">Single</div>
<svg class="a" style="left:1777px;top:103px" width="11" height="11" viewBox="0 0 11 11" shape-rendering="crispEdges"><path d="M3 0h5v1h1v1h1v1h1v5h-1v1h-1v1h-1v1h-5v-1h-1v-1h-1v-1h-1v-5h1v-1h1v-1h1z" fill="#a7a59c"/><path d="M3 1h5v1h1v1h1v5h-1v1h-1v1h-5v-1h-1v-1h-1v-5h1v-1h1z" fill="#fff"/></svg><div class="t" style="left:1793px;top:101px;letter-spacing:0.199px;">Roll</div>
<svg class="a" style="left:1777px;top:121px" width="11" height="11" viewBox="0 0 11 11" shape-rendering="crispEdges"><path d="M3 0h5v1h1v1h1v1h1v5h-1v1h-1v1h-1v1h-5v-1h-1v-1h-1v-1h-1v-5h1v-1h1v-1h1z" fill="#a7a59c"/><path d="M3 1h5v1h1v1h1v5h-1v1h-1v1h-5v-1h-1v-1h-1v-5h1v-1h1z" fill="#fff"/></svg><div class="t" style="left:1793px;top:119px;letter-spacing:-0.137px;">Stop</div>

<!-- Vertical -->
<div class="frame" style="left:1772px;top:146px;width:72px;height:902px;"></div>
<div class="flab" style="left:1776px;top:138px;letter-spacing:0.043px;">Vertical</div>
<div class="t" style="left:1776px;top:153px;letter-spacing:0.027px;">Gain</div>
<div class="t" style="left:1814px;top:153px;letter-spacing:0.146px;">Pos</div>
<div class="vtr" style="left:1783px;top:169px;width:15px;height:778px;"></div>
<div class="vth" style="left:1783px;top:532px;width:15px;height:31px;"></div>
<div class="vtr" style="left:1818px;top:169px;width:15px;height:778px;"></div>
<div class="vth" style="left:1818px;top:542px;width:15px;height:31px;"></div>
<div class="hl" style="left:1774px;top:951px;width:69px;"></div>
<div class="t c" style="left:1774px;width:69px;top:956px;letter-spacing:0.006px;">Scale</div>
<div class="t c" style="left:1774px;width:69px;top:971px;letter-spacing:0.312px;">----</div>
<div class="btn" style="left:1774px;top:986px;width:69px;height:38px;"></div>
<div class="t" style="left:1789px;top:990px;letter-spacing:0.125px;">Offset</div>
<div class="t" style="left:1789px;top:1005px;letter-spacing:-0.237px;">0.000</div>
<div class="btn" style="left:1774px;top:1024px;width:69px;height:23px;"></div>
<div class="t c" style="left:1774px;width:69px;top:1028px;letter-spacing:-0.004px;">Chan Off</div>

<!-- Trigger -->
<div class="frame" style="left:1846px;top:57px;width:73px;height:991px;"></div>
<div class="flab" style="left:1850px;top:49px;letter-spacing:-0.105px;">Trigger</div>
<svg class="a" style="left:1851px;top:67px" width="11" height="11" viewBox="0 0 11 11" shape-rendering="crispEdges"><path d="M3 0h5v1h1v1h1v1h1v5h-1v1h-1v1h-1v1h-5v-1h-1v-1h-1v-1h-1v-5h1v-1h1v-1h1z" fill="#a7a59c"/><path d="M3 1h5v1h1v1h1v5h-1v1h-1v1h-5v-1h-1v-1h-1v-5h1v-1h1z" fill="#fff"/><path d="M4 3h3v1h1v3h-1v1h-3v-1h-1v-3h1z" fill="#0a0a0a"/></svg><div class="t" style="left:1867px;top:65px;letter-spacing:0.125px;">Normal</div>
<svg class="a" style="left:1851px;top:85px" width="11" height="11" viewBox="0 0 11 11" shape-rendering="crispEdges"><path d="M3 0h5v1h1v1h1v1h1v5h-1v1h-1v1h-1v1h-5v-1h-1v-1h-1v-1h-1v-5h1v-1h1v-1h1z" fill="#a7a59c"/><path d="M3 1h5v1h1v1h1v5h-1v1h-1v1h-5v-1h-1v-1h-1v-5h1v-1h1z" fill="#fff"/></svg><div class="t" style="left:1867px;top:83px;letter-spacing:-0.043px;">Auto</div>
<div class="btn" style="left:1848px;top:100px;width:70px;height:23px;"></div>
<div class="t c" style="left:1848px;width:70px;top:104px;letter-spacing:-0.184px;">Force</div>
<div class="t" style="left:1848px;top:123px;letter-spacing:0.091px;">Level</div>
<div class="t" style="left:1889px;top:123px;letter-spacing:0.146px;">Pos</div>
<div class="vtr" style="left:1858px;top:139px;width:15px;height:808px;"></div>
<div class="vth" style="left:1858px;top:503px;width:15px;height:31px;"></div>
<div class="vtr" style="left:1893px;top:139px;width:15px;height:808px;"></div>
<div class="vth" style="left:1893px;top:540px;width:15px;height:31px;"></div>
<div class="hl" style="left:1848px;top:951px;width:70px;"></div>
<div class="t c" style="left:1848px;width:70px;top:956px;letter-spacing:0.091px;">Level</div>
<div class="t c" style="left:1848px;width:70px;top:971px;letter-spacing:-0.105px;">+5.958m</div>
<div class="btn" style="left:1848px;top:986px;width:70px;height:23px;"></div>
<div class="t c" style="left:1848px;width:70px;top:990px;letter-spacing:0.083px;">Rising</div>
<div class="btn" style="left:1848px;top:1009px;width:70px;height:38px;"></div>
<div class="t" style="left:1858px;top:1013px;letter-spacing:-0.154px;">Source</div>
<div class="t" style="left:1858px;top:1028px;white-space:pre;letter-spacing:-0.147px;">Chan  1</div>

</body></html>
